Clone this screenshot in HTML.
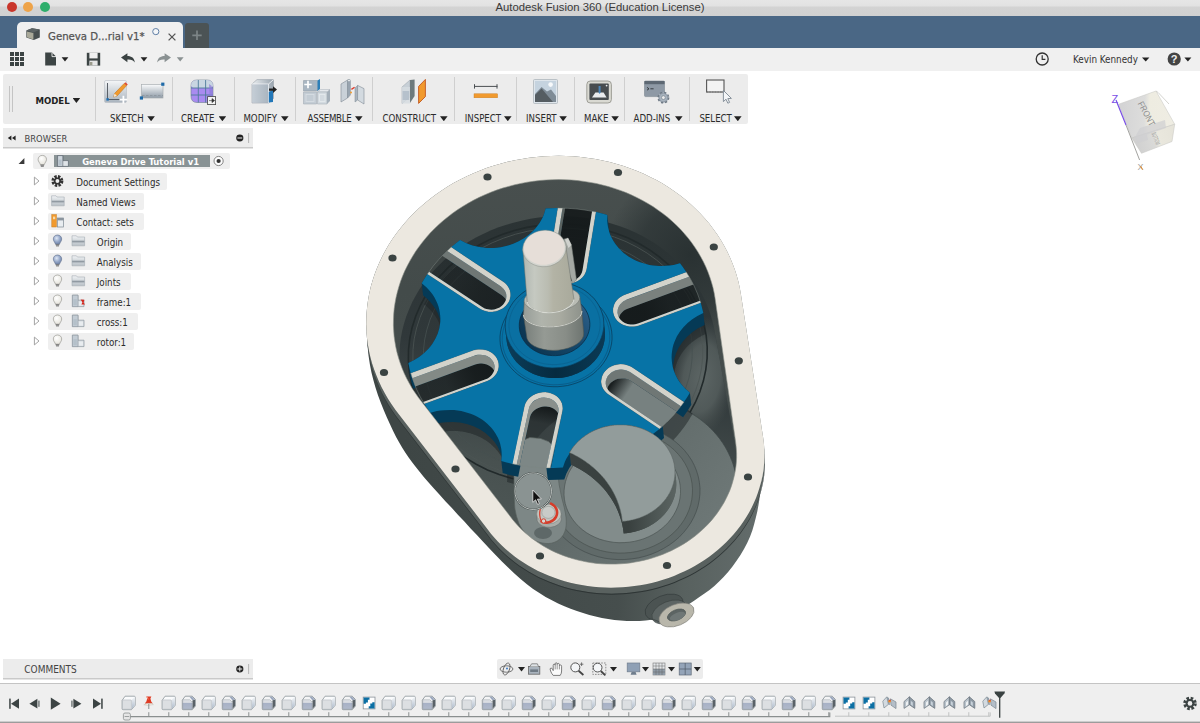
<!DOCTYPE html>
<html><head><meta charset="utf-8"><title>Autodesk Fusion 360 (Education License)</title>
<style>
*{box-sizing:border-box;margin:0;padding:0}
html,body{width:1200px;height:723px;overflow:hidden;background:#fff}
body{position:relative;font-family:"DejaVu Sans Condensed","DejaVu Sans","Liberation Sans",sans-serif;font-stretch:condensed;font-size:10px;color:#222;-webkit-font-smoothing:antialiased}
.abs{position:absolute}
#titlebar{left:0;top:0;width:1200px;height:16px;background:linear-gradient(#e6e6e6 0,#e2e2e2 6px,#d3d3d3 7px,#d1d1d1 16px)}
#title{left:0;top:0;width:1200px;height:15px;line-height:14px;text-align:center;font-family:"Liberation Sans",sans-serif;font-stretch:normal;font-size:11.3px;color:#3a3a3a}
.tl{width:10px;height:10px;border-radius:50%;top:2px}
#tabbar{left:0;top:16px;width:1200px;height:32px;background:#4a6785}
#tab{left:17px;top:22px;width:166px;height:27px;background:#f0f0f0;border-radius:5px 5px 0 0}
#tabtxt{left:48px;top:29.8px;-webkit-text-stroke:.25px #555;font-size:11.3px;color:#555;line-height:14px;white-space:nowrap}
#plus{left:185px;top:23px;width:24px;height:25px;background:#4b5355;border-radius:3px 3px 0 0}
#qat{left:0;top:48px;width:1200px;height:23px;background:#f0f0f0}
#ribbon{left:3px;top:74px;width:745px;height:50px;background:#ececec;border-radius:2px}
.sep{width:1px;top:77px;height:44px;background:#cfcfcf}
.lbl{top:113px;height:12px;line-height:12px;font-size:9.6px;color:#2b2b2b;white-space:nowrap}
.dd{width:7.6px;height:5px;background:#222;clip-path:polygon(0 0,100% 0,50% 100%)}
#bhead{left:3px;top:128px;width:250px;height:20px;background:#ececec;border-bottom:1px solid #c9c9c9;box-shadow:0 1px 0 #e4e4e4}
#chead{left:3px;top:659px;width:250px;height:20px;background:#ececec;border-bottom:1px solid #c9c9c9;box-shadow:0 1px 0 #e4e4e4}
.row{height:16px;background:#efefef;border-radius:2px}
.rt{font-size:9.7px;line-height:12px;color:#2b2b2b;white-space:nowrap}
#timeline{left:0;top:683px;width:1200px;height:40px;background:#efefef;border-top:1px solid #c4c4c4}
#navbar{left:497px;top:659px;width:206px;height:20px;background:#ececec;border-radius:2px}
</style></head><body>
<!-- TITLEBAR -->
<div id="titlebar" class="abs"></div>
<div id="title" class="abs">Autodesk Fusion 360 (Education License)</div>
<div class="abs tl" style="left:6.5px;background:#c9362b"></div>
<div class="abs tl" style="left:23px;background:#eea348"></div>
<div class="abs tl" style="left:40px;background:#2eae6b"></div>
<div id="tabbar" class="abs"></div>
<div id="tab" class="abs"></div>
<div id="tabtxt" class="abs">Geneva D...rial v1*</div>
<div id="plus" class="abs"></div>
<div id="qat" class="abs"></div>
<!-- QAT-ICONS -->
<svg class="abs" style="left:0;top:16px" width="1200" height="56" viewBox="0 16 1200 56">
<!-- tab icon cube -->
<path d="M26.3 30.6 L32 28.2 L39.8 29.6 L39.8 37.4 L33.8 40 L26.3 37.6 Z" fill="#474f50"/>
<path d="M26.8 31.4 L33.4 33 L33.4 39.4 L26.8 37.2 Z" fill="#a9a999"/>
<path d="M26.3 30.6 L32 28.2 L39.8 29.6 L33.6 32.4 Z" fill="#5c6465"/>
<circle cx="155.8" cy="31.6" r="3.1" fill="#f4f6f8" stroke="#5f7fa6" stroke-width="1"/>
<path d="M168.6 33.6 L175.4 40.4 M175.4 33.6 L168.6 40.4" stroke="#555" stroke-width="1.3" fill="none"/>
<path d="M197 30.6 V40 M192.3 35.3 H201.7" stroke="#7d8587" stroke-width="1.7" fill="none"/>
<!-- grid -->
<g fill="#3c4444"><rect x="10" y="52" width="4" height="4"/><rect x="15" y="52" width="4" height="4"/><rect x="20" y="52" width="4" height="4"/><rect x="10" y="57" width="4" height="4"/><rect x="15" y="57" width="4" height="4"/><rect x="20" y="57" width="4" height="4"/><rect x="10" y="62" width="4" height="4"/><rect x="15" y="62" width="4" height="4"/><rect x="20" y="62" width="4" height="4"/></g>
<!-- file -->
<path d="M45.2 52.6 H52 L56 56.6 V65.6 H45.2 Z" fill="#3c4444"/><path d="M52 52.6 V56.6 H56" fill="none" stroke="#f0f0f0" stroke-width=".9"/>
<path d="M61.6 57.2 H68.4 L65 61.4 Z" fill="#222"/>
<!-- save -->
<path d="M86.8 52.8 H100.2 V65.6 H86.8 Z" fill="#3c4444"/><rect x="89.4" y="52.8" width="8.2" height="5.6" fill="#f0f0f0"/><rect x="89.4" y="60.6" width="8.2" height="5" fill="#e6e6e6"/><rect x="90" y="62" width="2.4" height="3.2" fill="#9b9b8c"/>
<!-- undo -->
<path d="M121 57.6 L127.4 53.2 V56 C131.5 56 134.6 58 134.8 62.6 C133.4 60.3 131.2 59.4 127.4 59.6 V62.2 Z" fill="#3a4242"/>
<path d="M140.6 57.2 H147.4 L144 61.4 Z" fill="#222"/>
<!-- redo -->
<path d="M171 57.6 L164.6 53.2 V56 C160.5 56 157.4 58 157.2 62.6 C158.6 60.3 160.8 59.4 164.6 59.6 V62.2 Z" fill="#8a9192"/>
<path d="M176.8 57.2 H183.6 L180.2 61.4 Z" fill="#8a9192"/>
<!-- clock -->
<circle cx="1042.2" cy="59" r="6" fill="none" stroke="#333" stroke-width="1.3"/><path d="M1042.2 55.2 V59.3 H1045.4" fill="none" stroke="#333" stroke-width="1.2"/>
<path d="M1142 57.4 H1149.4 L1145.7 61.6 Z" fill="#222"/>
<circle cx="1174.2" cy="59" r="6.6" fill="#444"/>
<text x="1174.2" y="63" font-family="Liberation Sans,sans-serif" font-weight="bold" font-size="11" fill="#f0f0f0" text-anchor="middle">?</text>
<path d="M1184.4 57.4 H1191.4 L1187.9 61.6 Z" fill="#222"/>
</svg>
<div class="abs" style="left:1073px;top:53.4px;font-size:9.8px;line-height:14px;color:#333;white-space:nowrap">Kevin Kennedy</div>
<!-- RIBBON -->
<div id="ribbon" class="abs"></div>
<!-- RIBBON-ITEMS -->
<div class="abs sep" style="left:94.5px"></div>
<div class="abs sep" style="left:172.0px"></div>
<div class="abs sep" style="left:233.5px"></div>
<div class="abs sep" style="left:295.3px"></div>
<div class="abs sep" style="left:372.3px"></div>
<div class="abs sep" style="left:454.4px"></div>
<div class="abs sep" style="left:516.4px"></div>
<div class="abs sep" style="left:574.0px"></div>
<div class="abs sep" style="left:623.6px"></div>
<div class="abs sep" style="left:689.0px"></div>
<div class="abs" style="left:9px;top:86px;width:1px;height:26px;background:#c4c4c4"></div><div class="abs" style="left:12px;top:86px;width:1px;height:26px;background:#c4c4c4"></div>
<div class="abs" style="left:35.5px;top:93.8px;font-size:9.5px;font-weight:bold;line-height:14px;color:#222">MODEL</div><div class="abs dd" style="left:72.6px;top:98px"></div>
<div class="abs lbl" style="left:110.0px">SKETCH</div><div class="abs dd" style="left:147.3px;top:116.2px"></div>
<div class="abs lbl" style="left:181.0px">CREATE</div><div class="abs dd" style="left:218.6px;top:116.2px"></div>
<div class="abs lbl" style="left:243.4px">MODIFY</div><div class="abs dd" style="left:281.0px;top:116.2px"></div>
<div class="abs lbl" style="left:307.6px;letter-spacing:-.25px">ASSEMBLE</div><div class="abs dd" style="left:355.0px;top:116.2px"></div>
<div class="abs lbl" style="left:382.4px">CONSTRUCT</div><div class="abs dd" style="left:440.0px;top:116.2px"></div>
<div class="abs lbl" style="left:464.7px">INSPECT</div><div class="abs dd" style="left:504.0px;top:116.2px"></div>
<div class="abs lbl" style="left:526.0px">INSERT</div><div class="abs dd" style="left:559.3px;top:116.2px"></div>
<div class="abs lbl" style="left:584.0px">MAKE</div><div class="abs dd" style="left:611.3px;top:116.2px"></div>
<div class="abs lbl" style="left:633.5px">ADD-INS</div><div class="abs dd" style="left:675.0px;top:116.2px"></div>
<div class="abs lbl" style="left:699.4px">SELECT</div><div class="abs dd" style="left:734.0px;top:116.2px"></div>
<svg class="abs" style="left:0;top:74px" width="760" height="50" viewBox="0 74 760 50">
<defs>
<linearGradient id="gi1" x1="0" y1="0" x2="0" y2="1"><stop offset="0" stop-color="#f4f6f8"/><stop offset="1" stop-color="#a9b3bd"/></linearGradient>
<linearGradient id="gi2" x1="0" y1="0" x2="0" y2="1"><stop offset="0" stop-color="#fafbfc"/><stop offset="1" stop-color="#8e9aa6"/></linearGradient>
<linearGradient id="gi3" x1="0" y1="0" x2="1" y2="0"><stop offset="0" stop-color="#e9edf0"/><stop offset="1" stop-color="#9aa5af"/></linearGradient>
</defs>
<!-- sketch -->
<rect x="104.5" y="80.5" width="22" height="22" rx="1.5" fill="url(#gi1)" stroke="#b8bec4" stroke-width=".6"/>
<path d="M107.5 83 V99.5 H124" fill="none" stroke="#5a6068" stroke-width="1"/>
<rect x="106.4" y="98.2" width="2.4" height="2.4" fill="#1d6fb5"/>
<path d="M114.5 93.6 L124.2 83.4 L126.6 85.6 L117 96 L113.6 97 Z" fill="#f19a2e" stroke="#b56a14" stroke-width=".5"/>
<path d="M124.2 83.4 L125.4 82.2 L127.8 84.4 L126.6 85.6 Z" fill="#e04a32"/>
<path d="M114.5 93.6 L117 96 L113.6 97 Z" fill="#f3e7d3"/>
<path d="M123.4 95.8 V103.6 M119.5 99.7 H127.3" stroke="#fff" stroke-width="1.8"/>
<!-- rectangle tool -->
<rect x="141.5" y="84.5" width="21.5" height="13.5" fill="url(#gi2)" stroke="#a9aeb2" stroke-width=".7"/>
<path d="M142 95.5 H163" stroke="#8b949c" stroke-width=".8" stroke-dasharray="2.5 1.5"/>
<rect x="161.2" y="82.6" width="3.2" height="3.2" fill="#1f6aa8"/><rect x="139.8" y="96.4" width="3.2" height="3.2" fill="#1f6aa8"/>
<!-- create -->
<path d="M191 86 Q191 80 197 80 H207 Q213 80 213 86 V96 Q213 102.5 207 102.5 H197 Q191 102.5 191 96 Z" fill="#a98bf0" stroke="#6f7f8e" stroke-width=".6"/>
<path d="M191 86 Q191 80 197 80 H207 Q213 80 213 86 L211 88 H193 Z" fill="#c9d6e2"/>
<path d="M198.3 80 V102.5 M205.6 80 V102.5 M191 88 H213 M191 95 H213" stroke="#4f7a9a" stroke-width=".9" fill="none"/>
<path d="M209 84 Q213 86 213 92 V96 Q213 100 210 101.6 Z" fill="#8b7bd8" opacity=".7"/>
<rect x="207.6" y="96.6" width="8" height="8" fill="#f4f4f4" stroke="#444" stroke-width=".8"/>
<path d="M209 100.6 H212 V98.6 L214.6 100.6 L212 102.6 V100.6" fill="#333" stroke="#333" stroke-width=".6"/>
<!-- modify -->
<path d="M252 84 L257 79.6 H273.5 V98.5 L268.5 103 H252 Z" fill="url(#gi3)" stroke="#9aa3ab" stroke-width=".6"/>
<path d="M252 84 H268.5 V103 M268.5 84 L273.5 79.6" fill="none" stroke="#eef1f4" stroke-width=".9"/>
<rect x="252.4" y="84.4" width="15.8" height="18.2" fill="#a7b4c1" opacity=".55"/>
<path d="M268.8 92 L273 90 V102 L268.8 102.6 Z" fill="#2277b8"/>
<path d="M269 88.4 H273 V86.2 L277 89.6 L273 93 V90.8 H269 Z" fill="#222"/>
<!-- assemble 1 -->
<path d="M303.5 80.5 H317.5 V91 H303.5 Z" fill="#a9b6c2" stroke="#8894a0" stroke-width=".5"/>
<path d="M317.5 80.5 L320 79 V89 L317.5 91 Z" fill="#2d7fb8"/>
<path d="M308 80.8 V88.2 M304.3 84.5 H311.7" stroke="#fff" stroke-width="1.7"/>
<path d="M303.5 92 H316.5 V104 H303.5 Z" fill="#c3ccd4" stroke="#9aa5ae" stroke-width=".5"/>
<path d="M317.5 92 H327 L330 89.5 H320.5 Z" fill="#e4e8ec" stroke="#9aa5ae" stroke-width=".4"/>
<path d="M317.5 92 H327 V104 H317.5 Z" fill="#d3dae0" stroke="#9aa5ae" stroke-width=".5"/>
<path d="M327 92 L330 89.5 V101 L327 104 Z" fill="#a4afb9"/>
<rect x="306" y="94.4" width="8" height="7" fill="none" stroke="#d9dfe4" stroke-width=".8"/><rect x="319.6" y="94.4" width="5.4" height="7" fill="none" stroke="#e7ebee" stroke-width=".8"/>
<!-- assemble 2 (joint) -->
<path d="M341 84 L347.6 80 V98 L341 102 Z" fill="#c9d1d8" stroke="#7f8a94" stroke-width=".6"/>
<path d="M347.6 80 Q349.6 78.6 350.4 81 V95 L347.6 98 Z" fill="#9aa6b1" stroke="#7f8a94" stroke-width=".5"/>
<ellipse cx="349" cy="80.4" rx="1.5" ry="1" fill="#eef1f3" stroke="#7f8a94" stroke-width=".4"/>
<path d="M355 88 L357.6 85.4 V100 L355 102 Z" fill="#aab5bf" stroke="#7f8a94" stroke-width=".5"/>
<path d="M357.6 85.4 L364 88.6 V104 L357.6 100 Z" fill="#d3dae0" stroke="#7f8a94" stroke-width=".6"/>
<path d="M351.4 89.4 L354.6 87.2" stroke="#e03a2a" stroke-width="1.3"/><circle cx="351" cy="92.6" r="1" fill="#f19a2e"/>
<!-- construct -->
<path d="M402 87 L410 80 V97 L402 103.5 Z" fill="#c7cfd6" stroke="#98a2ab" stroke-width=".5"/>
<path d="M410 80 L414.6 79.4 V96 L410 103 V97 Z" fill="#6d7a7d"/>
<path d="M402 87 H410 V103.5 H402 Z" fill="#d6dce1" opacity=".8"/>
<rect x="402.6" y="91" width="6.6" height="9" fill="#a9b6c3" opacity=".7"/>
<path d="M418.6 86.4 L425.4 79.4 V96.6 L418.6 103.4 Z" fill="#f19a2e" stroke="#c2571f" stroke-width=".9"/>
<!-- inspect -->
<path d="M474 86.4 H497.4 M474.5 84.2 V88.6 M497 84.2 V88.6" stroke="#4a4f52" stroke-width="1" fill="none"/>
<rect x="474" y="93.8" width="23.6" height="4" fill="#f19a2e" stroke="#c67a1f" stroke-width=".4"/>
<!-- insert -->
<rect x="533.5" y="79.5" width="24" height="24" rx="1" fill="#dfe6ec" stroke="#aeb6bd" stroke-width=".8"/>
<rect x="535" y="81" width="21" height="21" fill="#c5d3df"/>
<path d="M535 102 V94 L541.6 87 L547 91.4 L551 89.4 L556 96 V102 Z" fill="#7f8c97"/>
<path d="M535 102 V95 L541.6 88.4 L553 102 Z" fill="#555d62"/>
<circle cx="550.6" cy="84.6" r="2.3" fill="#f7f9fb"/>
<!-- make -->
<rect x="586.8" y="81" width="24.6" height="22" rx="3.5" fill="#d9d9d2" stroke="#8e8e86" stroke-width=".8"/>
<rect x="589.4" y="83.6" width="19.4" height="16.4" rx="1" fill="#474c4f"/>
<path d="M592 97.6 L595.4 92.6 H603.6 L606.6 97.6 Z" fill="#e9ebed"/>
<path d="M598.6 86 H600.6 V92.6 L599.6 94 L598.6 92.6 Z" fill="#4d86b8"/>
<circle cx="606.6" cy="85.6" r=".9" fill="#e9ebed"/>
<!-- add-ins -->
<rect x="644.5" y="81" width="20" height="15.6" rx="1" fill="#8e99a5" stroke="#6f7a85" stroke-width=".5"/>
<rect x="644.5" y="81" width="20" height="3.2" fill="#5d6873"/>
<path d="M647 87.4 L649 88.8 L647 90.2 M650.4 88.8 H653.6" stroke="#2d3338" stroke-width=".9" fill="none"/>
<circle cx="663.4" cy="97.6" r="5.2" fill="#b4bec8" stroke="#6f7a85" stroke-width="1.6" stroke-dasharray="2.2 1.9"/>
<circle cx="663.4" cy="97.6" r="4.2" fill="#a9b4bf" stroke="#7d8893" stroke-width=".6"/>
<circle cx="663.4" cy="97.6" r="1.9" fill="#ececec" stroke="#6f7a85" stroke-width=".6"/>
<!-- select -->
<rect x="706.6" y="80" width="17.4" height="12" fill="#f4f4f4" stroke="#555" stroke-width="1.1"/>
<path d="M706.6 92 H724" stroke="#777" stroke-width="1" stroke-dasharray="1.5 1.2"/>
<path d="M723.4 90.4 L723.4 101.6 L726 99.2 L727.8 103.2 L729.6 102.4 L727.8 98.6 L731.4 98.4 Z" fill="#f4f6f8" stroke="#7d8893" stroke-width=".9" stroke-linejoin="round"/>
</svg>
<!-- BROWSER -->
<div id="bhead" class="abs"></div>
<!-- BROWSER-ITEMS -->
<div class="abs" style="left:24.5px;top:131.7px;font-size:9.3px;line-height:14px;color:#444">BROWSER</div>
<div class="abs row" style="left:33px;top:153px;width:197px;height:16px"></div>
<div class="abs" style="left:54px;top:155px;width:155.5px;height:12.4px;background:#899395"></div>
<div class="abs" style="left:82.2px;top:154.5px;font-size:9.35px;font-weight:bold;line-height:13px;color:#fff;white-space:nowrap">Geneva Drive Tutorial v1</div>
<div class="abs row" style="left:48px;top:173px;width:118.8px;height:16.5px"></div>
<div class="abs rt" style="left:76.3px;top:176.6px">Document Settings</div>
<div class="abs row" style="left:48px;top:193px;width:95.6px;height:16.5px"></div>
<div class="abs rt" style="left:76.3px;top:196.6px">Named Views</div>
<div class="abs row" style="left:48px;top:213px;width:95.6px;height:16.5px"></div>
<div class="abs rt" style="left:76.3px;top:216.6px">Contact: sets</div>
<div class="abs row" style="left:48px;top:233px;width:82.7px;height:16.5px"></div>
<div class="abs rt" style="left:96.8px;top:236.6px">Origin</div>
<div class="abs row" style="left:48px;top:253px;width:92.8px;height:16.5px"></div>
<div class="abs rt" style="left:96.8px;top:256.6px">Analysis</div>
<div class="abs row" style="left:48px;top:273px;width:82.7px;height:16.5px"></div>
<div class="abs rt" style="left:96.8px;top:276.6px">Joints</div>
<div class="abs row" style="left:48px;top:293px;width:92.8px;height:16.5px"></div>
<div class="abs rt" style="left:96.8px;top:296.6px">frame:1</div>
<div class="abs row" style="left:48px;top:313px;width:89.8px;height:16.5px"></div>
<div class="abs rt" style="left:96.8px;top:316.6px">cross:1</div>
<div class="abs row" style="left:48px;top:333px;width:85.7px;height:16.5px"></div>
<div class="abs rt" style="left:96.8px;top:336.6px">rotor:1</div>
<svg class="abs" style="left:0;top:126px" width="260" height="230" viewBox="0 126 260 230">
<defs><linearGradient id="gfold" x1="0" y1="0" x2="0" y2="1"><stop offset="0" stop-color="#f2f4f6"/><stop offset=".45" stop-color="#d5dade"/><stop offset=".5" stop-color="#9aa3ab"/><stop offset=".62" stop-color="#8b949c"/><stop offset=".7" stop-color="#c9cfd4"/><stop offset="1" stop-color="#b9c0c6"/></linearGradient>
<radialGradient id="gbon" cx=".4" cy=".35" r=".7"><stop offset="0" stop-color="#dfe8f6"/><stop offset=".6" stop-color="#8fa2c4"/><stop offset="1" stop-color="#6f82a6"/></radialGradient>
<radialGradient id="gboff" cx=".4" cy=".35" r=".7"><stop offset="0" stop-color="#ffffff"/><stop offset="1" stop-color="#e4e2da"/></radialGradient>
<g id="bulbon"><path d="M0 -5.6 C2.6 -5.6 4.2 -3.8 4.2 -1.6 C4.2 0.6 2.4 1.8 2 3.6 H-2 C-2.4 1.8 -4.2 0.6 -4.2 -1.6 C-4.2 -3.8 -2.6 -5.6 0 -5.6 Z" fill="url(#gbon)" stroke="#5f6f8c" stroke-width=".6"/><path d="M-1.8 4.2 H1.8 M-1.5 5.3 H1.5" stroke="#555" stroke-width=".8"/></g>
<g id="bulboff"><path d="M0 -5.6 C2.6 -5.6 4.2 -3.8 4.2 -1.6 C4.2 0.6 2.4 1.8 2 3.6 H-2 C-2.4 1.8 -4.2 0.6 -4.2 -1.6 C-4.2 -3.8 -2.6 -5.6 0 -5.6 Z" fill="url(#gboff)" stroke="#8c8c86" stroke-width=".6"/><path d="M-1.8 4.2 H1.8 M-1.5 5.3 H1.5" stroke="#555" stroke-width=".8"/></g>
<g id="fold"><path d="M0 1 H4.4 L5.4 2.2 H12.6 V11 H0 Z" fill="url(#gfold)" stroke="#a3abb2" stroke-width=".6"/></g>
<g id="comp"><path d="M0 0 H5.6 V5 H11.6 V11.4 H0 Z" fill="#d9dfe4" stroke="#8d979f" stroke-width=".7"/><path d="M0 0 H5.6 V11.4 H0 Z" fill="#c3ccd4" stroke="#8d979f" stroke-width=".6"/><rect x="1" y="4" width="3.4" height="6" fill="#aebac5" opacity=".7"/><rect x="6.6" y="6.4" width="4" height="4" fill="#eef1f3" opacity=".7"/></g>
</defs>
<path d="M11.4 135.6 V140.4 L7.8 138 Z M15.6 135.6 V140.4 L12 138 Z" fill="#222"/>
<ellipse cx="239.8" cy="138" rx="3.6" ry="3.4" fill="#222"/><rect x="237.4" y="137.5" width="4.8" height="1" fill="#ececec"/>
<path d="M248.6 133 V143" stroke="#b5b5b5" stroke-width="1"/>
<path d="M24.4 158 V164 H18.6 Z" fill="#3a3a3a"/>
<use href="#bulboff" x="42.3" y="161"/>
<g transform="translate(57.6 155.6)"><path d="M0 0 H5.2 V5 H10.8 V10.8 H0 Z" fill="#dfe4e8" stroke="#59636b" stroke-width=".7"/><path d="M0 0 H5.2 V10.8 H0 Z" fill="#cdd5dc" stroke="#59636b" stroke-width=".6"/><rect x="1" y="4" width="3" height="5.6" fill="#aebac5" opacity=".8"/></g>
<circle cx="218.6" cy="161" r="4.6" fill="#fdfdfd" stroke="#777" stroke-width=".9"/><circle cx="218.6" cy="161" r="2.1" fill="#333"/>
<path d="M34.4 177.1 L39 181.0 L34.4 184.9 Z" fill="#fff" stroke="#9a9a9a" stroke-width=".9" stroke-linejoin="round"/>
<g transform="translate(57.4 181.0)"><circle r="4.3" fill="none" stroke="#333" stroke-width="3.4" stroke-dasharray="2.2 1.18"/><circle r="3.6" fill="#333"/><circle r="1.9" fill="#efefef"/></g>
<path d="M34.4 197.1 L39 201.0 L34.4 204.9 Z" fill="#fff" stroke="#9a9a9a" stroke-width=".9" stroke-linejoin="round"/>
<use href="#fold" x="51.6" y="194.8"/>
<path d="M34.4 217.1 L39 221.0 L34.4 224.9 Z" fill="#fff" stroke="#9a9a9a" stroke-width=".9" stroke-linejoin="round"/>
<g transform="translate(51.8 214.6)"><rect x="0" y="0" width="4.6" height="12.4" fill="#f19a2e" stroke="#c67a1f" stroke-width=".5"/><rect x="5.6" y="3.4" width="6.2" height="9" fill="#e9edf0" stroke="#7f8a93" stroke-width=".7"/><rect x="5.6" y="3.4" width="6.2" height="2.4" fill="#8b959e"/><rect x="1.2" y="2" width="2.2" height="2.6" fill="#f7d9a8"/></g>
<path d="M34.4 237.1 L39 241.0 L34.4 244.9 Z" fill="#fff" stroke="#9a9a9a" stroke-width=".9" stroke-linejoin="round"/>
<use href="#bulbon" x="57.5" y="240.6"/>
<use href="#fold" x="72" y="234.8"/>
<path d="M34.4 257.1 L39 261.0 L34.4 264.9 Z" fill="#fff" stroke="#9a9a9a" stroke-width=".9" stroke-linejoin="round"/>
<use href="#bulbon" x="57.5" y="260.6"/>
<use href="#fold" x="72" y="254.8"/>
<path d="M34.4 277.1 L39 281.0 L34.4 284.9 Z" fill="#fff" stroke="#9a9a9a" stroke-width=".9" stroke-linejoin="round"/>
<use href="#bulboff" x="57.5" y="280.6"/>
<use href="#fold" x="72" y="274.8"/>
<path d="M34.4 297.1 L39 301.0 L34.4 304.9 Z" fill="#fff" stroke="#9a9a9a" stroke-width=".9" stroke-linejoin="round"/>
<use href="#bulboff" x="57.5" y="300.6"/>
<use href="#comp" x="72.4" y="295.2"/>
<path d="M80.6 299.4 L84.4 299.8 L83.6 302.6 L85 304.6 L81.4 304.4 L82.4 302.2 Z" fill="#d5281e"/>
<path d="M34.4 317.1 L39 321.0 L34.4 324.9 Z" fill="#fff" stroke="#9a9a9a" stroke-width=".9" stroke-linejoin="round"/>
<use href="#bulboff" x="57.5" y="320.6"/>
<use href="#comp" x="72.4" y="315.2"/>
<path d="M34.4 337.1 L39 341.0 L34.4 344.9 Z" fill="#fff" stroke="#9a9a9a" stroke-width=".9" stroke-linejoin="round"/>
<use href="#bulboff" x="57.5" y="340.6"/>
<use href="#comp" x="72.4" y="335.2"/>
</svg>
<!-- MODEL -->
<svg class="abs" style="left:0;top:0" width="1200" height="723" viewBox="0 0 1200 723">
<defs>
<linearGradient id="gbody" gradientUnits="userSpaceOnUse" x1="400" y1="500" x2="760" y2="520"><stop offset="0" stop-color="#3e4645"/><stop offset=".62" stop-color="#464e4d"/><stop offset=".8" stop-color="#58615f"/><stop offset="1" stop-color="#636c6b"/></linearGradient>
<linearGradient id="gwall" gradientUnits="userSpaceOnUse" x1="0" y1="175" x2="0" y2="560"><stop offset="0" stop-color="#484f4e"/><stop offset=".3" stop-color="#434b4a"/><stop offset=".6" stop-color="#464e4d"/><stop offset="1" stop-color="#4a5251"/></linearGradient><radialGradient id="gwdark" gradientUnits="userSpaceOnUse" cx="690" cy="255" r="85"><stop offset="0" stop-color="#283031" stop-opacity=".95"/><stop offset=".6" stop-color="#2b3334" stop-opacity=".7"/><stop offset="1" stop-color="#2b3334" stop-opacity="0"/></radialGradient>
<clipPath id="cinner"><path d="M393.4 325.2L393.5 319.7L393.7 314.2L394.2 308.7L395.0 303.2L396.0 297.7L397.3 292.3L398.8 286.9L400.5 281.6L402.5 276.3L404.7 271.1L407.2 266.0L409.9 260.9L412.8 256.0L415.9 251.1L419.2 246.4L422.8 241.7L426.5 237.2L430.4 232.8L434.6 228.6L438.9 224.4L443.4 220.5L448.1 216.7L452.9 213.0L457.9 209.5L463.1 206.2L468.4 203.1L473.8 200.1L479.3 197.3L485.0 194.7L490.8 192.3L496.6 190.1L502.6 188.1L508.6 186.4L514.7 184.8L520.9 183.4L527.2 182.2L533.4 181.3L539.7 180.5L546.1 180.0L552.4 179.7L558.7 179.6L565.1 179.7L571.4 180.0L577.7 180.6L584.0 181.4L590.2 182.4L596.3 183.5L602.4 185.0L608.5 186.6L614.4 188.4L620.3 190.4L626.0 192.6L631.7 195.1L637.2 197.7L642.6 200.5L647.9 203.5L653.0 206.6L657.9 210.0L662.8 213.5L667.4 217.1L671.9 221.0L676.2 225.0L680.3 229.1L684.2 233.4L687.9 237.8L691.4 242.3L694.7 247.0L697.8 251.7L700.6 256.6L703.3 261.6L705.7 266.6L707.9 271.8L709.8 277.0L711.5 282.3L713.0 287.6L714.2 293.0L715.1 298.4L735.5 441.0L736.0 445.2L736.4 449.3L736.6 453.5L736.6 457.7L736.4 461.9L736.0 466.1L735.4 470.3L734.6 474.4L733.6 478.5L732.5 482.6L731.2 486.7L729.7 490.7L728.0 494.6L726.1 498.5L724.1 502.4L721.9 506.1L719.5 509.8L717.0 513.4L714.3 516.9L711.5 520.4L708.5 523.7L705.3 526.9L702.0 530.1L698.6 533.1L695.1 536.0L691.4 538.7L687.6 541.4L683.7 543.9L679.7 546.3L675.5 548.5L671.3 550.7L667.0 552.6L662.7 554.4L658.2 556.1L653.7 557.6L649.1 559.0L644.4 560.2L639.7 561.2L635.0 562.1L630.3 562.9L625.5 563.4L620.7 563.8L615.8 564.1L611.0 564.1L606.2 564.0L601.4 563.8L596.6 563.4L591.9 562.8L587.1 562.0L582.5 561.1L577.8 560.0L573.2 558.8L568.7 557.4L564.3 555.9L559.9 554.2L555.6 552.4L551.4 550.4L547.3 548.3L543.3 546.0L539.5 543.6L535.7 541.1L532.0 538.4L528.5 535.6L525.1 532.7L521.8 529.7L518.7 526.5L515.8 523.3L512.9 519.9L510.3 516.5L418.6 397.8L415.3 393.1L412.2 388.4L409.4 383.5L406.7 378.5L404.3 373.5L402.1 368.3L400.2 363.1L398.5 357.8L397.0 352.5L395.8 347.1L394.9 341.7L394.1 336.2L393.7 330.7Z"/></clipPath>
</defs>
<path d="M762.0 478.0L763.0 472.9L763.7 467.8L764.2 462.7L764.4 457.6L764.4 452.5L764.2 447.3L763.8 442.2L763.1 437.2L740.9 294.2L739.8 287.9L738.4 281.6L736.7 275.4L734.7 269.2L732.4 263.2L729.9 257.2L727.1 251.3L724.0 245.5L720.7 239.8L717.1 234.3L713.3 228.9L709.2 223.6L704.9 218.4L700.3 213.5L695.5 208.7L690.5 204.0L685.3 199.6L679.9 195.3L674.3 191.2L668.5 187.3L662.6 183.6L656.4 180.1L650.1 176.9L643.7 173.8L637.1 171.0L630.4 168.4L623.6 166.1L616.7 163.9L609.7 162.1L602.6 160.4L595.4 159.0L588.1 157.9L580.8 157.0L573.5 156.3L566.1 155.9L558.8 155.8L551.4 155.9L544.0 156.3L536.6 156.9L529.3 157.8L522.0 158.9L514.7 160.2L507.5 161.8L500.4 163.7L493.4 165.8L486.4 168.1L479.6 170.7L472.9 173.4L466.3 176.5L459.8 179.7L453.5 183.1L447.3 186.8L441.3 190.7L435.5 194.7L429.9 199.0L424.4 203.4L419.2 208.0L414.2 212.8L409.3 217.8L404.7 222.9L400.4 228.2L396.3 233.6L392.4 239.1L388.7 244.8L385.4 250.5L382.2 256.4L379.4 262.4L376.8 268.5L374.5 274.6L372.5 280.8L370.7 287.1L369.2 293.4L368.1 299.8L367.2 306.2L366.6 312.6L366.3 319.0L366.2 325.1L366.0 325.0L366.2 327.2L366.5 331.2L366.5 331.8L366.6 333.7L367.0 338.5L367.7 347.5L368.6 356.1L369.9 364.4L371.4 372.2L373.3 379.8L375.4 387.3L377.9 394.9L380.7 402.5L383.8 410.2L386.9 417.5L390.0 424.3L393.0 430.8L396.1 436.9L399.2 442.6L402.4 448.0L405.6 453.1L409.0 457.9L412.5 462.7L416.2 467.5L420.0 472.3L424.0 477.2L428.6 482.5L433.7 488.3L439.4 494.6L445.6 501.4L451.9 508.1L458.1 514.9L464.4 521.6L470.6 528.4L476.9 535.1L483.1 541.8L489.4 548.4L495.6 555.1L501.9 561.4L508.1 567.6L514.4 573.4L520.6 579.1L526.9 584.2L533.1 588.9L539.4 593.1L545.6 596.9L551.9 600.3L558.1 603.4L564.4 606.2L570.6 608.8L576.9 611.0L583.1 613.1L589.4 614.9L595.6 616.6L601.9 617.9L608.1 619.1L614.4 619.9L620.6 620.6L626.9 620.9L633.1 621.1L639.4 620.9L645.6 620.6L651.6 619.8L657.2 618.8L662.5 617.4L667.5 615.6L672.6 613.4L677.9 610.8L683.2 607.8L688.8 604.2L694.1 600.7L699.4 597.1L704.5 593.5L709.5 589.9L714.4 585.9L719.1 581.6L723.6 576.9L728.1 572.0L732.3 566.7L736.4 561.1L740.3 555.2L744.0 548.9L747.3 542.7L750.1 536.5L752.4 530.3L754.2 524.0L755.8 517.8L757.3 511.6L758.4 505.4L759.4 499.3L760.2 492.8L760.8 485.9L761.0 482.2Z" fill="url(#gbody)"/>
<path d="M367.0 337.8L367.5 344.2L368.4 350.6L369.5 356.9L370.9 363.2L372.6 369.4L374.6 375.6L376.9 381.6L379.4 387.6L382.2 393.5L385.3 399.3L388.6 405.0L392.2 410.5L396.0 415.9L488.2 535.4L491.4 539.7L494.9 543.7L498.5 547.7L502.3 551.6L506.3 555.3L510.5 558.8L514.8 562.2L519.2 565.5L523.9 568.6L528.6 571.5L533.5 574.3L538.5 576.9L543.7 579.3L548.9 581.6L554.2 583.6L559.7 585.5L565.2 587.2L570.8 588.7L576.5 590.0L582.2 591.1L588.0 592.0L593.8 592.8L599.6 593.3L605.5 593.6L611.4 593.7L617.3 593.6L623.2 593.3L629.1 592.8L634.9 592.1L640.7 591.3L646.5 590.2L652.2 588.9L657.9 587.4L663.5 585.8L669.1 583.9L674.5 581.9L679.9 579.6L685.1 577.2L690.3 574.7L695.3 571.9L700.2 569.0L705.0 565.9L709.7 562.7L714.2 559.3L718.5 555.7L722.7 552.0L726.7 548.2L730.5 544.3L734.2 540.2L737.7 536.0L741.0 531.7L744.1 527.3L747.0 522.8L749.7 518.2L752.2 513.5L754.4 508.7L756.5 503.9L758.3 499.0L759.9 494.0L761.3 489.0L762.5 484.0L763.5 478.9L764.2 473.8L764.7 468.7L764.9 463.6L764.9 458.5L764.7 453.3L764.3 448.2L764.2 448.0L764.4 452.5L764.4 457.6L764.2 462.7L763.7 467.8L763.0 472.9L762.0 478.0L760.8 483.0L759.4 488.0L757.8 493.0L756.0 497.9L753.9 502.7L751.7 507.5L749.2 512.2L746.5 516.8L743.6 521.3L740.5 525.7L737.2 530.0L733.7 534.2L730.0 538.3L726.2 542.2L722.2 546.0L718.0 549.7L713.7 553.3L709.2 556.7L704.5 559.9L699.7 563.0L694.8 565.9L689.8 568.7L684.6 571.2L679.4 573.6L674.0 575.9L668.6 577.9L663.0 579.8L657.4 581.4L651.7 582.9L646.0 584.2L640.2 585.3L634.4 586.1L628.6 586.8L622.7 587.3L616.8 587.6L610.9 587.7L605.0 587.6L599.1 587.3L593.3 586.8L587.5 586.0L581.7 585.1L576.0 584.0L570.3 582.7L564.7 581.2L559.2 579.5L553.7 577.6L548.4 575.6L543.2 573.3L538.0 570.9L533.0 568.3L528.1 565.5L523.4 562.6L518.7 559.5L514.3 556.2L510.0 552.8L505.8 549.3L501.8 545.6L498.0 541.7L494.4 537.7L490.9 533.7L487.7 529.4L395.5 409.9L391.7 404.5L388.1 399.0L384.8 393.3L381.7 387.5L378.9 381.6L376.4 375.6L374.1 369.6L372.1 363.4L370.4 357.2L369.0 350.9L367.9 344.6L367.0 338.2L367.0 337.4Z" fill="#59615f"/>
<path d="M368.5 351.6L369.6 357.9L371.0 364.2L372.7 370.4L374.7 376.6L377.0 382.6L379.5 388.6L382.3 394.5L385.4 400.3L388.7 406.0L392.3 411.5L396.1 416.9L488.3 536.4L491.5 540.7L495.0 544.7L498.6 548.7L502.4 552.6L506.4 556.3L510.6 559.8L514.9 563.2L519.3 566.5L524.0 569.6L528.7 572.5L533.6 575.3L538.6 577.9L543.8 580.3L549.0 582.6L554.3 584.6L559.8 586.5L565.3 588.2L570.9 589.7L576.6 591.0L582.3 592.1L588.1 593.0L593.9 593.8L599.7 594.3L605.6 594.6L611.5 594.7L617.4 594.6L623.3 594.3L629.2 593.8L635.0 593.1L640.8 592.3L646.6 591.2L652.3 589.9L658.0 588.4L663.6 586.8L669.2 584.9L674.6 582.9L680.0 580.6L685.2 578.2L690.4 575.7L695.4 572.9L700.3 570.0L705.1 566.9L709.8 563.7L714.3 560.3L718.6 556.7L722.8 553.0L726.8 549.2L730.6 545.3L734.3 541.2L737.8 537.0L741.1 532.7L744.2 528.3L747.1 523.8L749.8 519.2L752.3 514.5L754.5 509.7L756.6 504.9L758.4 500.0L760.0 495.0L761.4 490.0L762.6 485.0L763.6 479.9L764.3 474.8L764.8 469.7L765.0 464.6L765.0 459.5L764.8 454.3L764.4 449.2L764.3 448.9L764.7 453.3L764.9 458.5L764.9 463.6L764.7 468.7L764.2 473.8L763.5 478.9L762.5 484.0L761.3 489.0L759.9 494.0L758.3 499.0L756.5 503.9L754.4 508.7L752.2 513.5L749.7 518.2L747.0 522.8L744.1 527.3L741.0 531.7L737.7 536.0L734.2 540.2L730.5 544.3L726.7 548.2L722.7 552.0L718.5 555.7L714.2 559.3L709.7 562.7L705.0 565.9L700.2 569.0L695.3 571.9L690.3 574.7L685.1 577.2L679.9 579.6L674.5 581.9L669.1 583.9L663.5 585.8L657.9 587.4L652.2 588.9L646.5 590.2L640.7 591.3L634.9 592.1L629.1 592.8L623.2 593.3L617.3 593.6L611.4 593.7L605.5 593.6L599.6 593.3L593.8 592.8L588.0 592.0L582.2 591.1L576.5 590.0L570.8 588.7L565.2 587.2L559.7 585.5L554.2 583.6L548.9 581.6L543.7 579.3L538.5 576.9L533.5 574.3L528.6 571.5L523.9 568.6L519.2 565.5L514.8 562.2L510.5 558.8L506.3 555.3L502.3 551.6L498.5 547.7L494.9 543.7L491.4 539.7L488.2 535.4L396.0 415.9L392.2 410.5L388.6 405.0L385.3 399.3L382.2 393.5L379.4 387.6L376.9 381.6L374.6 375.6L372.6 369.4L370.9 363.2L369.5 356.9L368.4 350.6L367.6 344.5L367.6 345.2Z" fill="#2e3535"/>
<g transform="rotate(-22 676.5 615)">
<ellipse cx="668" cy="603" rx="20" ry="11.5" fill="#4b5352" stroke="#333a3a" stroke-width=".6"/>
<path d="M652.6 609.5 L658.1 615 L694.9 615 L689.4 609.5 Z" fill="#5d6564"/>
<ellipse cx="671" cy="609.5" rx="18.4" ry="10.6" fill="#5d6564" stroke="#3a4241" stroke-width=".6"/>
<path d="M652.6 609.5 L658.1 615 M689.4 609.5 L694.9 615" stroke="#3a4241" stroke-width=".6"/>
<ellipse cx="676.5" cy="615" rx="18.4" ry="10.6" fill="#b9b7ab" stroke="#7f807a" stroke-width=".6"/>
<ellipse cx="676.5" cy="615" rx="9.6" ry="5.2" fill="#5c6463" stroke="#4a5251" stroke-width=".6"/>
<ellipse cx="677" cy="616.6" rx="8.2" ry="3.6" fill="#6f7776"/>
</g>
<path d="M393.4 325.2L393.5 319.7L393.7 314.2L394.2 308.7L395.0 303.2L396.0 297.7L397.3 292.3L398.8 286.9L400.5 281.6L402.5 276.3L404.7 271.1L407.2 266.0L409.9 260.9L412.8 256.0L415.9 251.1L419.2 246.4L422.8 241.7L426.5 237.2L430.4 232.8L434.6 228.6L438.9 224.4L443.4 220.5L448.1 216.7L452.9 213.0L457.9 209.5L463.1 206.2L468.4 203.1L473.8 200.1L479.3 197.3L485.0 194.7L490.8 192.3L496.6 190.1L502.6 188.1L508.6 186.4L514.7 184.8L520.9 183.4L527.2 182.2L533.4 181.3L539.7 180.5L546.1 180.0L552.4 179.7L558.7 179.6L565.1 179.7L571.4 180.0L577.7 180.6L584.0 181.4L590.2 182.4L596.3 183.5L602.4 185.0L608.5 186.6L614.4 188.4L620.3 190.4L626.0 192.6L631.7 195.1L637.2 197.7L642.6 200.5L647.9 203.5L653.0 206.6L657.9 210.0L662.8 213.5L667.4 217.1L671.9 221.0L676.2 225.0L680.3 229.1L684.2 233.4L687.9 237.8L691.4 242.3L694.7 247.0L697.8 251.7L700.6 256.6L703.3 261.6L705.7 266.6L707.9 271.8L709.8 277.0L711.5 282.3L713.0 287.6L714.2 293.0L715.1 298.4L735.5 441.0L736.0 445.2L736.4 449.3L736.6 453.5L736.6 457.7L736.4 461.9L736.0 466.1L735.4 470.3L734.6 474.4L733.6 478.5L732.5 482.6L731.2 486.7L729.7 490.7L728.0 494.6L726.1 498.5L724.1 502.4L721.9 506.1L719.5 509.8L717.0 513.4L714.3 516.9L711.5 520.4L708.5 523.7L705.3 526.9L702.0 530.1L698.6 533.1L695.1 536.0L691.4 538.7L687.6 541.4L683.7 543.9L679.7 546.3L675.5 548.5L671.3 550.7L667.0 552.6L662.7 554.4L658.2 556.1L653.7 557.6L649.1 559.0L644.4 560.2L639.7 561.2L635.0 562.1L630.3 562.9L625.5 563.4L620.7 563.8L615.8 564.1L611.0 564.1L606.2 564.0L601.4 563.8L596.6 563.4L591.9 562.8L587.1 562.0L582.5 561.1L577.8 560.0L573.2 558.8L568.7 557.4L564.3 555.9L559.9 554.2L555.6 552.4L551.4 550.4L547.3 548.3L543.3 546.0L539.5 543.6L535.7 541.1L532.0 538.4L528.5 535.6L525.1 532.7L521.8 529.7L518.7 526.5L515.8 523.3L512.9 519.9L510.3 516.5L418.6 397.8L415.3 393.1L412.2 388.4L409.4 383.5L406.7 378.5L404.3 373.5L402.1 368.3L400.2 363.1L398.5 357.8L397.0 352.5L395.8 347.1L394.9 341.7L394.1 336.2L393.7 330.7Z" fill="url(#gwall)"/>
<path d="M393.4 325.2L393.5 319.7L393.7 314.2L394.2 308.7L395.0 303.2L396.0 297.7L397.3 292.3L398.8 286.9L400.5 281.6L402.5 276.3L404.7 271.1L407.2 266.0L409.9 260.9L412.8 256.0L415.9 251.1L419.2 246.4L422.8 241.7L426.5 237.2L430.4 232.8L434.6 228.6L438.9 224.4L443.4 220.5L448.1 216.7L452.9 213.0L457.9 209.5L463.1 206.2L468.4 203.1L473.8 200.1L479.3 197.3L485.0 194.7L490.8 192.3L496.6 190.1L502.6 188.1L508.6 186.4L514.7 184.8L520.9 183.4L527.2 182.2L533.4 181.3L539.7 180.5L546.1 180.0L552.4 179.7L558.7 179.6L565.1 179.7L571.4 180.0L577.7 180.6L584.0 181.4L590.2 182.4L596.3 183.5L602.4 185.0L608.5 186.6L614.4 188.4L620.3 190.4L626.0 192.6L631.7 195.1L637.2 197.7L642.6 200.5L647.9 203.5L653.0 206.6L657.9 210.0L662.8 213.5L667.4 217.1L671.9 221.0L676.2 225.0L680.3 229.1L684.2 233.4L687.9 237.8L691.4 242.3L694.7 247.0L697.8 251.7L700.6 256.6L703.3 261.6L705.7 266.6L707.9 271.8L709.8 277.0L711.5 282.3L713.0 287.6L714.2 293.0L715.1 298.4L735.5 441.0L736.0 445.2L736.4 449.3L736.6 453.5L736.6 457.7L736.4 461.9L736.0 466.1L735.4 470.3L734.6 474.4L733.6 478.5L732.5 482.6L731.2 486.7L729.7 490.7L728.0 494.6L726.1 498.5L724.1 502.4L721.9 506.1L719.5 509.8L717.0 513.4L714.3 516.9L711.5 520.4L708.5 523.7L705.3 526.9L702.0 530.1L698.6 533.1L695.1 536.0L691.4 538.7L687.6 541.4L683.7 543.9L679.7 546.3L675.5 548.5L671.3 550.7L667.0 552.6L662.7 554.4L658.2 556.1L653.7 557.6L649.1 559.0L644.4 560.2L639.7 561.2L635.0 562.1L630.3 562.9L625.5 563.4L620.7 563.8L615.8 564.1L611.0 564.1L606.2 564.0L601.4 563.8L596.6 563.4L591.9 562.8L587.1 562.0L582.5 561.1L577.8 560.0L573.2 558.8L568.7 557.4L564.3 555.9L559.9 554.2L555.6 552.4L551.4 550.4L547.3 548.3L543.3 546.0L539.5 543.6L535.7 541.1L532.0 538.4L528.5 535.6L525.1 532.7L521.8 529.7L518.7 526.5L515.8 523.3L512.9 519.9L510.3 516.5L418.6 397.8L415.3 393.1L412.2 388.4L409.4 383.5L406.7 378.5L404.3 373.5L402.1 368.3L400.2 363.1L398.5 357.8L397.0 352.5L395.8 347.1L394.9 341.7L394.1 336.2L393.7 330.7Z" fill="url(#gwdark)"/>
<g clip-path="url(#cinner)"><defs><linearGradient id="gfloor" gradientUnits="userSpaceOnUse" x1="520" y1="215" x2="470" y2="520"><stop offset="0" stop-color="#2b3334"/><stop offset=".45" stop-color="#30383a"/><stop offset=".8" stop-color="#485150"/><stop offset="1" stop-color="#4d5655"/></linearGradient><linearGradient id="gpocket" gradientUnits="userSpaceOnUse" x1="540" y1="420" x2="700" y2="540"><stop offset="0" stop-color="#566060"/><stop offset=".5" stop-color="#626c6b"/><stop offset="1" stop-color="#6d7776"/></linearGradient></defs>
<path d="M605.5 595.2L599.3 594.4L593.2 593.4L587.2 592.0L581.2 590.4L575.4 588.5L569.7 586.3L564.2 583.9L558.8 581.2L553.6 578.3L548.5 575.2L543.7 571.8L539.1 568.2L534.7 564.4L530.6 560.4L526.7 556.2L523.0 551.8L426.3 433.2L421.9 427.2L417.8 421.0L414.1 414.6L410.8 408.0L407.9 401.3L405.4 394.5L403.4 387.6L401.7 380.5L400.5 373.4L399.7 366.3L399.4 359.1L399.5 351.8L400.0 344.6L400.9 337.5L402.3 330.3L404.1 323.3L406.3 316.3L409.0 309.4L412.0 302.6L415.5 296.0L419.3 289.6L423.5 283.3L428.1 277.2L433.1 271.3L438.4 265.7L444.0 260.2L449.9 255.1L456.1 250.2L462.6 245.6L469.4 241.3L476.4 237.3L483.6 233.7L491.0 230.3L498.6 227.3L506.4 224.7L514.3 222.4L522.4 220.4L530.5 218.8L538.7 217.6L547.0 216.8L555.3 216.4L563.5 216.3L571.8 216.6L580.1 217.3L588.2 218.3L596.3 219.7L604.3 221.5L612.2 223.7L619.9 226.2L627.5 229.1L634.8 232.3L642.0 235.8L648.9 239.7L655.5 243.8L661.9 248.3L668.0 253.1L673.8 258.1L679.3 263.4L684.5 269.0L689.3 274.8L693.7 280.8L697.8 287.0L701.5 293.4L704.8 300.0L707.7 306.7L710.2 313.5L712.2 320.4L713.9 327.5L740.1 472.0L741.0 477.4L741.6 482.8L741.8 488.2L741.8 493.7L741.4 499.1L740.7 504.5L739.6 509.9L738.3 515.2L736.6 520.5L734.6 525.7L732.3 530.8L729.7 535.8L726.8 540.7L723.6 545.4L720.1 550.0L716.4 554.5L712.4 558.7L708.2 562.8L703.7 566.7L699.0 570.4L694.1 573.8L689.0 577.1L683.7 580.1L678.3 582.9L672.7 585.4L666.9 587.7L661.1 589.7L655.1 591.4L649.0 592.9L642.9 594.0L636.7 595.0L630.5 595.6L624.2 595.9L617.9 596.0L611.7 595.8Z" fill="url(#gfloor)" />
<defs><radialGradient id="gfr" gradientUnits="userSpaceOnUse" cx="0" cy="0" r="1" gradientTransform="translate(702 378) rotate(8) scale(34 62)"><stop offset="0" stop-color="#5f6867" stop-opacity=".95"/><stop offset=".55" stop-color="#586160" stop-opacity=".8"/><stop offset="1" stop-color="#4a5251" stop-opacity="0"/></radialGradient></defs>
<path d="M605.5 595.2L599.3 594.4L593.2 593.4L587.2 592.0L581.2 590.4L575.4 588.5L569.7 586.3L564.2 583.9L558.8 581.2L553.6 578.3L548.5 575.2L543.7 571.8L539.1 568.2L534.7 564.4L530.6 560.4L526.7 556.2L523.0 551.8L426.3 433.2L421.9 427.2L417.8 421.0L414.1 414.6L410.8 408.0L407.9 401.3L405.4 394.5L403.4 387.6L401.7 380.5L400.5 373.4L399.7 366.3L399.4 359.1L399.5 351.8L400.0 344.6L400.9 337.5L402.3 330.3L404.1 323.3L406.3 316.3L409.0 309.4L412.0 302.6L415.5 296.0L419.3 289.6L423.5 283.3L428.1 277.2L433.1 271.3L438.4 265.7L444.0 260.2L449.9 255.1L456.1 250.2L462.6 245.6L469.4 241.3L476.4 237.3L483.6 233.7L491.0 230.3L498.6 227.3L506.4 224.7L514.3 222.4L522.4 220.4L530.5 218.8L538.7 217.6L547.0 216.8L555.3 216.4L563.5 216.3L571.8 216.6L580.1 217.3L588.2 218.3L596.3 219.7L604.3 221.5L612.2 223.7L619.9 226.2L627.5 229.1L634.8 232.3L642.0 235.8L648.9 239.7L655.5 243.8L661.9 248.3L668.0 253.1L673.8 258.1L679.3 263.4L684.5 269.0L689.3 274.8L693.7 280.8L697.8 287.0L701.5 293.4L704.8 300.0L707.7 306.7L710.2 313.5L712.2 320.4L713.9 327.5L740.1 472.0L741.0 477.4L741.6 482.8L741.8 488.2L741.8 493.7L741.4 499.1L740.7 504.5L739.6 509.9L738.3 515.2L736.6 520.5L734.6 525.7L732.3 530.8L729.7 535.8L726.8 540.7L723.6 545.4L720.1 550.0L716.4 554.5L712.4 558.7L708.2 562.8L703.7 566.7L699.0 570.4L694.1 573.8L689.0 577.1L683.7 580.1L678.3 582.9L672.7 585.4L666.9 587.7L661.1 589.7L655.1 591.4L649.0 592.9L642.9 594.0L636.7 595.0L630.5 595.6L624.2 595.9L617.9 596.0L611.7 595.8Z" fill="url(#gfr)" />
<path d="M578.8 225.0L591.6 226.9L604.2 229.7L616.4 233.4L628.2 238.1L639.4 243.7L650.0 250.1L659.9 257.3L669.0 265.2L677.3 273.8L684.7 283.0L691.1 292.8L696.5 303.0L700.8 313.6L704.1 324.5L706.2 335.7L707.2 347.0L707.1 358.3L705.8 369.6L703.4 380.8L699.9 391.8L695.3 402.5L689.7 412.8L683.1 422.7L675.5 432.0L667.0 440.8L657.7 448.9L647.6 456.2L636.9 462.8L625.5 468.6L613.6 473.5L601.3 477.5L588.7 480.6L575.8 482.6L562.8 483.7L549.8 483.9L536.8 483.0L524.0 481.1L511.4 478.3L499.2 474.6L487.5 469.9L476.2 464.3L465.6 457.9L455.7 450.7L446.6 442.8L438.3 434.2L430.9 425.0L424.5 415.2L419.1 405.0L414.8 394.4L411.6 383.5L409.4 372.3L408.4 361.0L408.5 349.7L409.8 338.4L412.2 327.2L415.7 316.2L420.3 305.5L425.9 295.2L432.5 285.3L440.1 276.0L448.6 267.2L457.9 259.1L468.0 251.8L478.8 245.2L490.1 239.4L502.0 234.5L514.3 230.5L526.9 227.4L539.8 225.4L552.8 224.3L565.8 224.1Z" fill="none" stroke="#222a2b" stroke-width="1.6" />
<path d="M578.2 228.9L590.6 230.7L602.8 233.4L614.6 237.1L626.0 241.6L636.9 247.0L647.2 253.2L656.8 260.2L665.7 267.9L673.7 276.2L680.9 285.2L687.1 294.6L692.3 304.5L696.5 314.8L699.7 325.4L701.7 336.2L702.7 347.2L702.6 358.2L701.4 369.1L699.0 380.0L695.6 390.6L691.2 401.0L685.7 411.0L679.3 420.6L671.9 429.7L663.7 438.2L654.7 446.0L644.9 453.2L634.5 459.6L623.5 465.2L611.9 469.9L600.0 473.8L587.8 476.8L575.3 478.8L562.7 479.9L550.0 480.0L537.4 479.1L525.0 477.3L512.8 474.6L501.0 470.9L489.6 466.4L478.7 461.0L468.4 454.8L458.8 447.8L449.9 440.1L441.9 431.8L434.7 422.8L428.5 413.4L423.3 403.5L419.1 393.2L415.9 382.6L413.9 371.8L412.9 360.8L413.0 349.8L414.2 338.9L416.6 328.0L420.0 317.4L424.4 307.0L429.9 297.0L436.3 287.4L443.7 278.3L451.9 269.8L460.9 262.0L470.7 254.8L481.1 248.4L492.2 242.8L503.7 238.1L515.6 234.2L527.8 231.2L540.3 229.2L552.9 228.1L565.6 228.0Z" fill="none" stroke="#4c5554" stroke-width="0.8" />
<path d="M576.7 237.9L588.2 239.6L599.6 242.1L610.5 245.5L621.1 249.7L631.2 254.7L640.8 260.5L649.7 266.9L657.9 274.1L665.4 281.8L672.0 290.1L677.8 298.9L682.6 308.1L686.5 317.7L689.4 327.5L691.4 337.5L692.3 347.7L692.1 357.9L691.0 368.0L688.9 378.1L685.7 388.0L681.6 397.6L676.5 406.9L670.5 415.8L663.7 424.2L656.1 432.1L647.7 439.4L638.6 446.0L628.9 452.0L618.7 457.2L608.0 461.6L597.0 465.2L585.6 467.9L574.0 469.8L562.3 470.8L550.6 470.9L538.9 470.1L527.4 468.4L516.1 465.9L505.1 462.5L494.5 458.3L484.4 453.3L474.8 447.5L465.9 441.1L457.7 433.9L450.3 426.2L443.6 417.9L437.9 409.1L433.0 399.9L429.1 390.3L426.2 380.5L424.3 370.5L423.3 360.3L423.5 350.1L424.6 340.0L426.8 329.9L429.9 320.0L434.0 310.4L439.1 301.1L445.1 292.2L451.9 283.8L459.5 275.9L467.9 268.6L477.0 262.0L486.7 256.0L496.9 250.8L507.6 246.4L518.6 242.8L530.0 240.1L541.6 238.2L553.3 237.2L565.0 237.1Z" fill="none" stroke="#465050" stroke-width="0.8" />
<path d="M642.3 397.1L640.5 396.9L638.7 396.7L636.9 396.6L635.1 396.5L633.3 396.4L631.4 396.4L629.6 396.4L627.8 396.4L626.0 396.4L624.2 396.4L622.4 396.5L620.6 396.6L618.8 396.8L617.0 396.9L615.2 397.1L613.4 397.3L611.6 397.5L609.8 397.8L608.0 398.1L606.2 398.4L604.4 398.7L602.7 399.1L600.9 399.5L599.2 399.9L597.4 400.3L595.7 400.8L593.9 401.3L592.2 401.8L590.5 402.3L588.8 402.9L587.1 403.5L585.4 404.1L583.7 404.7L582.1 405.3L580.4 406.0L578.8 406.7L577.2 407.4L575.6 408.2L574.0 409.0L572.4 409.7L570.8 410.6L569.2 411.4L567.7 412.3L566.2 413.1L564.7 414.0L563.2 414.9L561.7 415.9L560.3 416.8L558.8 417.8L557.4 418.8L556.0 419.8L554.6 420.9L553.3 421.9L551.9 423.0L550.6 424.1L549.3 425.2L548.0 426.4L546.7 427.5L545.5 428.7L544.3 429.9L543.1 431.1L541.9 432.3L540.8 433.5L539.6 434.8L538.5 436.0L537.5 437.3L536.4 438.6L535.4 439.9L534.4 441.3L533.4 442.6L532.4 443.9L531.5 445.3L530.6 446.7L529.7 448.1L528.8 449.5L528.0 450.9L527.2 452.3L526.4 453.8L525.7 455.2L524.9 456.7L524.3 458.1L523.6 459.6L522.9 461.1L522.3 462.6L521.7 464.1L521.2 465.6L520.7 467.1L520.2 468.6L519.7 470.1L519.2 471.7L518.8 473.2L518.4 474.7L518.1 476.3L517.8 477.8L517.5 479.4L517.2 481.0L517.0 482.5L516.7 484.1L516.6 485.7L516.4 487.2L516.3 488.8L516.2 490.4L516.1 492.0L516.1 493.5L516.1 495.1L516.1 496.7L516.2 498.2L516.3 499.8L516.4 501.4L516.5 502.9L516.7 504.5L516.9 506.1L517.1 507.6L517.4 509.2L517.7 510.7L518.0 512.3L518.4 513.8L518.7 515.3L519.1 516.9L519.6 518.4L520.0 519.9L520.5 521.4L521.1 522.9L521.6 524.4L522.2 525.9L522.8 527.3L523.4 528.8L524.1 530.2L524.8 531.7L525.5 533.1L526.2 534.5L527.0 535.9L527.8 537.3L528.6 538.7L529.5 540.1L530.4 541.5L531.3 542.8L532.2 544.1L533.1 545.5L534.1 546.8L535.1 548.1L536.2 549.3L537.2 550.6L538.3 551.8L539.4 553.1L540.5 554.3L541.6 555.5L542.8 556.7L544.0 557.8L545.2 559.0L546.5 560.1L547.7 561.2L549.0 562.3L550.3 563.4L551.6 564.4L552.9 565.5L554.3 566.5L555.7 567.5L557.1 568.5L558.5 569.4L559.9 570.3L561.4 571.3L562.8 572.1L564.3 573.0L565.8 573.9L567.4 574.7L568.9 575.5L570.4 576.3L572.0 577.0L573.6 577.8L575.2 578.5L576.8 579.2L578.4 579.9L580.0 580.5L581.7 581.1L583.4 581.7L585.0 582.3L586.7 582.9L588.4 583.4L590.1 583.9L591.8 584.4L593.5 584.8L595.3 585.2L597.0 585.6L598.8 586.0L600.5 586.4L602.3 586.7L604.0 587.0L605.8 587.3L607.6 587.5L609.4 587.8L611.2 588.0L613.0 588.1L614.8 588.3L616.6 588.4L618.4 588.5L620.2 588.6L622.0 588.6L623.8 588.7L625.6 588.7L627.4 588.6L629.2 588.6L631.0 588.5L632.8 588.4L634.6 588.3L636.4 588.1L638.2 587.9L640.0 587.7L641.8 587.5L643.6 587.2L645.4 586.9L647.2 586.6L649.0 586.3L650.7 585.9L652.5 585.5L654.3 585.1L656.0 584.7L657.8 584.2L659.5 583.7L661.2 583.2L662.9 582.7L664.6 582.1L666.3 581.6L668.0 581.0L669.7 580.3L671.3 579.7L673.0 579.0L674.6 578.3L676.3 577.6L677.9 576.8L679.5 576.1L681.1 575.3L682.6 574.5L684.2 573.6L685.7 572.8L687.2 571.9L688.7 571.0L690.2 570.1L691.7 569.1L693.2 568.2L694.6 567.2L696.0 566.2L697.4 565.2L698.8 564.1L700.2 563.1L701.5 562.0L702.8 560.9L704.1 559.8L705.4 558.6L706.7 557.5L707.9 556.3L709.1 555.1L710.3 553.9L711.5 552.7L712.7 551.5L713.8 550.2L714.9 549.0L716.0 547.7L717.0 546.4L718.1 545.1L719.1 543.8L720.1 542.4L721.0 541.1L721.9 539.7L722.9 538.3L723.7 536.9L724.6 535.5L725.4 534.1L726.2 532.7L727.0 531.3L727.8 529.8L728.5 528.4L729.2 526.9L729.8 525.4L730.5 523.9L731.1 522.5L731.7 521.0L732.2 519.5L732.8 517.9L733.3 516.4L733.7 514.9L734.2 513.4L734.6 511.8L735.0 510.3L735.3 508.7L735.7 507.2L736.0 505.6L736.2 504.1L736.5 502.5L736.7 500.9L736.9 499.4L737.0 497.8L737.1 496.2L737.2 494.6L737.3 493.1L737.3 491.5L737.3 489.9L737.3 488.4L737.2 486.8L737.2 485.2L737.0 483.6L736.9 482.1L736.7 480.5L736.5 479.0L736.3 477.4L736.0 475.8L735.7 474.3L735.4 472.8L735.1 471.2L734.7 469.7L734.3 468.2L733.8 466.6L733.4 465.1L732.9 463.6L732.4 462.1L731.8 460.6L731.2 459.2L730.6 457.7L730.0 456.2L729.3 454.8L728.6 453.3L727.9 451.9L727.2 450.5L726.4 449.1L725.6 447.7L724.8 446.3L723.9 444.9L723.1 443.6L722.2 442.2L721.2 440.9L720.3 439.6L719.3 438.2L718.3 437.0L717.3 435.7L716.2 434.4L715.1 433.2L714.0 431.9L712.9 430.7L711.8 429.5L710.6 428.4L709.4 427.2L708.2 426.0L707.0 424.9L705.7 423.8L704.4 422.7L703.1 421.6L701.8 420.6L700.5 419.6L699.1 418.5L697.7 417.5L696.3 416.6L694.9 415.6L693.5 414.7L692.0 413.8L690.6 412.9L689.1 412.0L687.6 411.2L686.1 410.3L684.5 409.5L683.0 408.7L681.4 408.0L679.8 407.2L678.2 406.5L676.6 405.8L675.0 405.2L673.4 404.5L671.7 403.9L670.1 403.3L668.4 402.7L666.7 402.2L665.0 401.6L663.3 401.1L661.6 400.7L659.9 400.2L658.2 399.8L656.4 399.4L654.7 399.0L652.9 398.6L651.2 398.3L649.4 398.0L647.6 397.7L645.8 397.5L644.0 397.3Z" fill="url(#gpocket)" stroke="#3f4847" stroke-width=".8"/>
<path d="M568.4 229.2L566.6 229.1L564.8 229.1L562.9 229.1L561.1 229.1L559.3 229.1L557.4 229.1L555.6 229.2L553.8 229.2L551.9 229.3L550.1 229.4L548.3 229.6L548.1 229.6L548.0 229.8L547.9 230.6L547.6 231.4L547.4 232.1L547.2 232.9L546.9 233.7L546.7 234.4L546.4 235.2L546.1 235.9L545.8 236.7L545.5 237.4L545.1 238.2L544.8 238.9L544.4 239.6L544.1 240.3L543.7 241.1L543.3 241.8L542.8 242.5L542.4 243.2L542.0 243.9L541.5 244.6L541.1 245.2L540.6 245.9L540.1 246.6L539.6 247.2L539.1 247.9L538.5 248.5L538.0 249.2L537.4 249.8L536.9 250.4L536.3 251.1L535.7 251.7L535.1 252.3L534.5 252.9L533.9 253.5L533.3 254.0L532.6 254.6L532.0 255.2L531.3 255.7L530.6 256.2L530.0 256.8L529.3 257.3L528.6 257.8L527.9 258.3L527.1 258.8L526.4 259.3L525.7 259.7L524.9 260.2L524.2 260.6L523.4 261.1L522.6 261.5L521.9 261.9L521.1 262.3L520.3 262.7L519.5 263.1L518.7 263.5L517.9 263.9L517.1 264.2L516.2 264.5L515.4 264.9L514.6 265.2L513.7 265.5L512.9 265.8L512.0 266.1L511.2 266.3L510.3 266.6L509.4 266.8L508.6 267.0L507.7 267.3L506.8 267.5L505.9 267.7L505.0 267.8L504.2 268.0L503.3 268.2L502.4 268.3L501.5 268.4L500.6 268.6L499.7 268.7L498.8 268.8L497.9 268.8L497.0 268.9L496.1 268.9L495.2 269.0L494.3 269.0L493.4 269.0L492.4 269.0L491.5 269.0L490.6 269.0L489.7 269.0L488.8 268.9L487.9 268.9L487.0 268.8L486.1 268.7L485.2 268.6L484.4 268.5L483.5 268.3L482.6 268.2L481.7 268.1L480.8 267.9L479.9 267.7L479.1 267.5L478.2 267.3L477.3 267.1L476.5 266.9L475.6 266.6L474.8 266.4L473.9 266.1L473.1 265.9L472.2 265.6L471.4 265.3L470.6 265.0L469.8 264.6L468.9 264.3L468.1 264.0L467.3 263.6L466.6 263.2L465.8 262.8L465.0 262.5L464.2 262.1L463.5 261.6L462.7 261.2L462.5 261.1L461.4 261.9L460.0 262.9L458.6 264.0L457.3 265.1L455.9 266.2L454.6 267.3L453.3 268.5L452.0 269.6L450.7 270.8L449.5 272.0L448.2 273.2L447.0 274.4L445.8 275.6L444.6 276.8L443.4 278.0L442.2 279.3L441.1 280.6L440.0 281.8L438.8 283.1L437.7 284.4L436.7 285.7L435.6 287.1L434.6 288.4L433.6 289.7L432.6 291.1L431.6 292.5L430.6 293.8L429.7 295.2L428.8 296.6L427.8 298.0L427.0 299.4L426.1 300.9L425.3 302.3L424.4 303.7L424.1 304.3L424.3 304.5L425.0 305.0L425.6 305.5L426.3 306.1L426.9 306.6L427.6 307.2L428.2 307.7L428.8 308.3L429.4 308.9L430.0 309.5L430.5 310.1L431.1 310.7L431.6 311.3L432.2 311.9L432.7 312.6L433.2 313.2L433.7 313.9L434.2 314.5L434.7 315.2L435.2 315.8L435.6 316.5L436.0 317.2L436.5 317.9L436.9 318.6L437.3 319.3L437.7 320.0L438.0 320.7L438.4 321.4L438.7 322.1L439.1 322.8L439.4 323.6L439.7 324.3L440.0 325.0L440.3 325.8L440.5 326.5L440.8 327.3L441.0 328.0L441.2 328.8L441.4 329.6L441.6 330.3L441.8 331.1L441.9 331.9L442.1 332.7L442.2 333.4L442.3 334.2L442.4 335.0L442.5 335.8L442.6 336.5L442.7 337.3L442.7 338.1L442.7 338.9L442.7 339.7L442.7 340.5L442.7 341.3L442.7 342.0L442.6 342.8L442.6 343.6L442.5 344.4L442.4 345.2L442.3 346.0L442.2 346.8L442.1 347.5L441.9 348.3L441.7 349.1L441.6 349.9L441.4 350.6L441.2 351.4L440.9 352.2L440.7 352.9L440.5 353.7L440.2 354.5L439.9 355.2L439.6 356.0L439.3 356.7L439.0 357.4L438.7 358.2L438.3 358.9L438.0 359.6L437.6 360.4L437.2 361.1L436.8 361.8L436.4 362.5L435.9 363.2L435.5 363.9L435.1 364.6L434.6 365.3L434.1 365.9L433.6 366.6L433.1 367.3L432.6 367.9L432.1 368.6L431.5 369.2L431.0 369.8L430.4 370.5L429.8 371.1L429.2 371.7L428.6 372.3L428.0 372.9L427.4 373.5L426.8 374.1L426.1 374.6L425.5 375.2L424.8 375.7L424.2 376.3L423.5 376.8L422.8 377.3L422.1 377.8L421.4 378.3L420.7 378.8L419.9 379.3L419.2 379.8L418.5 380.2L417.7 380.7L416.9 381.1L416.2 381.5L415.4 382.0L414.6 382.4L413.8 382.8L413.0 383.1L412.2 383.5L411.4 383.9L411.1 384.0L411.3 384.7L411.6 386.2L411.9 387.8L412.3 389.3L412.7 390.9L413.2 392.4L413.6 394.0L414.1 395.5L414.6 397.0L415.1 398.5L415.6 400.1L416.2 401.6L416.7 403.1L417.3 404.6L417.9 406.1L418.6 407.5L419.2 409.0L419.9 410.5L420.6 411.9L421.4 413.4L422.1 414.8L422.9 416.3L423.6 417.7L424.5 419.1L425.3 420.5L426.1 421.9L427.0 423.3L427.9 424.7L428.8 426.1L429.7 427.4L430.6 428.8L431.6 430.1L432.6 431.4L433.6 432.8L434.4 433.8L434.6 433.7L435.5 433.4L436.4 433.2L437.2 432.9L438.1 432.7L439.0 432.5L439.9 432.3L440.8 432.1L441.7 432.0L442.5 431.8L443.4 431.7L444.3 431.5L445.2 431.4L446.1 431.3L447.0 431.2L447.9 431.2L448.8 431.1L449.7 431.0L450.6 431.0L451.5 431.0L452.5 430.9L453.4 430.9L454.3 431.0L455.2 431.0L456.1 431.0L457.0 431.1L457.9 431.1L458.8 431.2L459.7 431.3L460.6 431.4L461.5 431.5L462.3 431.6L463.2 431.8L464.1 431.9L465.0 432.1L465.9 432.3L466.7 432.5L467.6 432.7L468.5 432.9L469.3 433.1L470.2 433.3L471.1 433.6L471.9 433.9L472.7 434.1L473.6 434.4L474.4 434.7L475.2 435.0L476.0 435.3L476.9 435.7L477.7 436.0L478.5 436.4L479.2 436.8L480.0 437.1L480.8 437.5L481.6 437.9L482.3 438.3L483.1 438.8L483.8 439.2L484.6 439.7L485.3 440.1L486.0 440.6L486.7 441.1L487.4 441.5L488.1 442.0L488.8 442.5L489.5 443.1L490.1 443.6L490.8 444.1L491.4 444.7L492.0 445.2L492.6 445.8L493.2 446.4L493.8 446.9L494.4 447.5L495.0 448.1L495.6 448.7L496.1 449.4L496.7 450.0L497.2 450.6L497.7 451.2L498.2 451.9L498.7 452.5L499.2 453.2L499.6 453.9L500.1 454.5L500.5 455.2L500.9 455.9L501.3 456.6L501.7 457.3L502.1 458.0L502.5 458.7L502.9 459.4L503.2 460.2L503.5 460.9L503.9 461.6L504.2 462.4L504.4 463.1L504.7 463.8L505.0 464.6L505.2 465.3L505.5 466.1L505.7 466.9L505.9 467.6L506.1 468.4L506.2 469.1L506.4 469.9L506.6 470.7L506.7 471.5L506.8 472.2L506.9 473.0L507.0 473.8L507.1 474.6L507.1 475.4L507.2 476.2L507.2 476.9L507.2 477.7L507.2 478.5L507.2 479.3L507.2 480.1L507.1 480.9L507.0 481.7L507.0 481.9L507.2 482.0L508.9 482.5L510.6 483.0L512.4 483.4L514.1 483.9L515.9 484.3L517.6 484.7L519.4 485.1L521.2 485.5L523.0 485.8L524.8 486.2L526.5 486.5L528.3 486.8L530.1 487.1L531.9 487.3L533.7 487.6L535.6 487.8L537.4 488.0L539.2 488.2L541.0 488.3L542.8 488.5L544.7 488.6L546.5 488.7L548.3 488.8L550.1 488.9L552.0 488.9L553.8 488.9L555.6 488.9L557.5 488.9L559.3 488.9L561.2 488.8L563.0 488.8L564.8 488.7L566.6 488.6L568.5 488.4L568.6 488.4L568.7 488.2L568.9 487.4L569.1 486.6L569.3 485.9L569.6 485.1L569.8 484.3L570.1 483.6L570.4 482.8L570.6 482.1L571.0 481.3L571.3 480.6L571.6 479.8L572.0 479.1L572.3 478.4L572.7 477.7L573.1 476.9L573.5 476.2L573.9 475.5L574.3 474.8L574.8 474.1L575.2 473.4L575.7 472.8L576.2 472.1L576.7 471.4L577.2 470.8L577.7 470.1L578.2 469.5L578.7 468.8L579.3 468.2L579.9 467.6L580.4 466.9L581.0 466.3L581.6 465.7L582.2 465.1L582.9 464.5L583.5 464.0L584.1 463.4L584.8 462.8L585.4 462.3L586.1 461.8L586.8 461.2L587.5 460.7L588.2 460.2L588.9 459.7L589.6 459.2L590.3 458.7L591.1 458.3L591.8 457.8L592.6 457.4L593.3 456.9L594.1 456.5L594.9 456.1L595.7 455.7L596.5 455.3L597.3 454.9L598.1 454.5L598.9 454.1L599.7 453.8L600.5 453.5L601.3 453.1L602.2 452.8L603.0 452.5L603.9 452.2L604.7 451.9L605.6 451.7L606.4 451.4L607.3 451.2L608.2 451.0L609.1 450.7L609.9 450.5L610.8 450.3L611.7 450.2L612.6 450.0L613.5 449.8L614.4 449.7L615.3 449.6L616.2 449.4L617.1 449.3L618.0 449.2L618.9 449.2L619.8 449.1L620.7 449.1L621.6 449.0L622.5 449.0L623.4 449.0L624.3 449.0L625.2 449.0L626.1 449.0L627.0 449.0L627.9 449.1L628.8 449.1L629.7 449.2L630.6 449.3L631.5 449.4L632.4 449.5L633.3 449.7L634.2 449.8L635.1 449.9L635.9 450.1L636.8 450.3L637.7 450.5L638.6 450.7L639.4 450.9L640.3 451.1L641.1 451.4L642.0 451.6L642.8 451.9L643.7 452.1L644.5 452.4L645.3 452.7L646.2 453.0L647.0 453.4L647.8 453.7L648.6 454.0L649.4 454.4L650.2 454.8L651.0 455.2L651.7 455.5L652.5 455.9L653.3 456.4L654.0 456.8L654.3 456.9L655.3 456.1L656.7 455.1L658.1 454.0L659.5 452.9L660.8 451.8L662.1 450.7L663.4 449.5L664.7 448.4L666.0 447.2L667.3 446.0L668.5 444.8L669.8 443.6L671.0 442.4L672.2 441.2L673.4 440.0L674.5 438.7L675.7 437.4L676.8 436.2L677.9 434.9L679.0 433.6L680.1 432.3L681.1 430.9L682.2 429.6L683.2 428.3L684.2 426.9L685.2 425.5L686.1 424.2L687.1 422.8L688.0 421.4L688.9 420.0L689.8 418.6L690.6 417.1L691.5 415.7L692.3 414.3L692.7 413.7L692.4 413.5L691.8 413.0L691.1 412.5L690.5 411.9L689.8 411.4L689.2 410.8L688.6 410.3L688.0 409.7L687.4 409.1L686.8 408.5L686.2 407.9L685.6 407.3L685.1 406.7L684.6 406.1L684.0 405.4L683.5 404.8L683.0 404.1L682.5 403.5L682.1 402.8L681.6 402.2L681.1 401.5L680.7 400.8L680.3 400.1L679.9 399.4L679.5 398.7L679.1 398.0L678.7 397.3L678.3 396.6L678.0 395.9L677.7 395.2L677.4 394.4L677.1 393.7L676.8 393.0L676.5 392.2L676.2 391.5L676.0 390.7L675.7 390.0L675.5 389.2L675.3 388.4L675.1 387.7L675.0 386.9L674.8 386.1L674.7 385.3L674.5 384.6L674.4 383.8L674.3 383.0L674.2 382.2L674.1 381.5L674.1 380.7L674.0 379.9L674.0 379.1L674.0 378.3L674.0 377.5L674.0 376.7L674.1 376.0L674.1 375.2L674.2 374.4L674.2 373.6L674.3 372.8L674.4 372.0L674.6 371.2L674.7 370.5L674.8 369.7L675.0 368.9L675.2 368.1L675.4 367.4L675.6 366.6L675.8 365.8L676.0 365.1L676.3 364.3L676.6 363.5L676.8 362.8L677.1 362.0L677.4 361.3L677.7 360.6L678.1 359.8L678.4 359.1L678.8 358.4L679.2 357.6L679.6 356.9L680.0 356.2L680.4 355.5L680.8 354.8L681.2 354.1L681.7 353.4L682.2 352.7L682.6 352.1L683.1 351.4L683.6 350.7L684.2 350.1L684.7 349.4L685.2 348.8L685.8 348.2L686.3 347.5L686.9 346.9L687.5 346.3L688.1 345.7L688.7 345.1L689.3 344.5L690.0 343.9L690.6 343.4L691.3 342.8L691.9 342.3L692.6 341.7L693.3 341.2L694.0 340.7L694.7 340.2L695.4 339.7L696.1 339.2L696.8 338.7L697.6 338.2L698.3 337.8L699.0 337.3L699.8 336.9L700.6 336.5L701.4 336.0L702.1 335.6L702.9 335.2L703.7 334.9L704.5 334.5L705.4 334.1L705.6 334.0L705.5 333.3L705.2 331.8L704.8 330.2L704.4 328.7L704.0 327.1L703.6 325.6L703.1 324.0L702.7 322.5L702.2 321.0L701.7 319.5L701.1 317.9L700.6 316.4L700.0 314.9L699.4 313.4L698.8 311.9L698.2 310.5L697.5 309.0L696.8 307.5L696.1 306.1L695.4 304.6L694.6 303.2L693.9 301.7L693.1 300.3L692.3 298.9L691.5 297.5L690.6 296.1L689.8 294.7L688.9 293.3L688.0 291.9L687.0 290.6L686.1 289.2L685.1 287.9L684.2 286.6L683.2 285.2L682.4 284.2L682.1 284.3L681.2 284.6L680.4 284.8L679.5 285.1L678.6 285.3L677.7 285.5L676.9 285.7L676.0 285.9L675.1 286.0L674.2 286.2L673.3 286.3L672.4 286.5L671.5 286.6L670.6 286.7L669.7 286.8L668.8 286.8L667.9 286.9L667.0 287.0L666.1 287.0L665.2 287.0L664.3 287.1L663.4 287.1L662.5 287.0L661.6 287.0L660.7 287.0L659.8 286.9L658.9 286.9L658.0 286.8L657.1 286.7L656.2 286.6L655.3 286.5L654.4 286.4L653.5 286.2L652.6 286.1L651.7 285.9L650.9 285.7L650.0 285.5L649.1 285.3L648.3 285.1L647.4 284.9L646.5 284.7L645.7 284.4L644.8 284.1L644.0 283.9L643.2 283.6L642.3 283.3L641.5 283.0L640.7 282.7L639.9 282.3L639.1 282.0L638.3 281.6L637.5 281.2L636.7 280.9L635.9 280.5L635.2 280.1L634.4 279.7L633.7 279.2L632.9 278.8L632.2 278.3L631.5 277.9L630.7 277.4L630.0 276.9L629.3 276.5L628.6 276.0L628.0 275.5L627.3 274.9L626.6 274.4L626.0 273.9L625.3 273.3L624.7 272.8L624.1 272.2L623.5 271.6L622.9 271.1L622.3 270.5L621.7 269.9L621.2 269.3L620.6 268.6L620.1 268.0L619.6 267.4L619.1 266.8L618.6 266.1L618.1 265.5L617.6 264.8L617.1 264.1L616.7 263.5L616.2 262.8L615.8 262.1L615.4 261.4L615.0 260.7L614.6 260.0L614.2 259.3L613.9 258.6L613.5 257.8L613.2 257.1L612.9 256.4L612.6 255.6L612.3 254.9L612.0 254.2L611.8 253.4L611.5 252.7L611.3 251.9L611.1 251.1L610.9 250.4L610.7 249.6L610.5 248.9L610.3 248.1L610.2 247.3L610.1 246.5L609.9 245.8L609.8 245.0L609.8 244.2L609.7 243.4L609.6 242.6L609.6 241.8L609.6 241.1L609.5 240.3L609.5 239.5L609.6 238.7L609.6 237.9L609.6 237.1L609.7 236.3L609.7 236.1L609.6 236.0L607.8 235.5L606.1 235.0L604.4 234.6L602.6 234.1L600.9 233.7L599.1 233.3L597.3 232.9L595.6 232.5L593.8 232.2L592.0 231.8L590.2 231.5L588.4 231.2L586.6 230.9L584.8 230.7L583.0 230.4L581.2 230.2L579.4 230.0L577.6 229.8L575.7 229.7L573.9 229.5L572.1 229.4L570.3 229.3Z" fill="#1b2223" opacity=".5"/>
<path d="M633.2 425.0L639.9 425.9L646.4 427.4L652.7 429.3L658.9 431.8L664.7 434.7L670.2 438.0L675.4 441.7L680.1 445.9L684.4 450.3L688.2 455.1L691.6 460.2L694.4 465.5L696.6 471.0L698.3 476.7L699.4 482.5L700.0 488.4L699.9 494.3L699.2 500.2L698.0 506.0L696.2 511.7L693.8 517.2L690.9 522.6L687.4 527.7L683.5 532.6L679.1 537.2L674.2 541.4L669.0 545.2L663.4 548.6L657.5 551.6L651.3 554.2L644.9 556.3L638.3 557.9L631.6 558.9L624.9 559.5L618.1 559.6L611.4 559.1L604.7 558.2L598.2 556.7L591.8 554.7L585.7 552.3L579.9 549.4L574.3 546.1L569.2 542.3L564.4 538.2L560.1 533.7L556.3 528.9L553.0 523.9L550.2 518.6L547.9 513.0L546.2 507.4L545.1 501.6L544.6 495.7L544.7 489.8L545.3 483.9L546.6 478.1L548.4 472.4L550.8 466.8L553.7 461.5L557.1 456.3L561.1 451.5L565.5 446.9L570.3 442.7L575.6 438.9L581.2 435.4L587.1 432.4L593.2 429.9L599.6 427.8L606.2 426.2L612.9 425.1L619.7 424.6L626.4 424.5Z" fill="#606a69" stroke="#454e4d" stroke-width="0.7" />
<path d="M632.1 431.4L638.2 432.3L644.1 433.6L649.8 435.4L655.3 437.6L660.6 440.2L665.6 443.2L670.3 446.6L674.5 450.3L678.4 454.4L681.9 458.7L684.9 463.3L687.4 468.1L689.5 473.1L691.0 478.2L692.0 483.4L692.5 488.7L692.4 494.1L691.8 499.4L690.7 504.6L689.1 509.8L686.9 514.8L684.3 519.7L681.1 524.3L677.6 528.7L673.6 532.8L669.2 536.6L664.5 540.1L659.4 543.2L654.1 545.9L648.5 548.2L642.7 550.1L636.8 551.5L630.7 552.5L624.6 553.0L618.5 553.1L612.4 552.7L606.4 551.8L600.5 550.5L594.7 548.7L589.2 546.5L583.9 543.9L578.9 540.9L574.3 537.5L570.0 533.8L566.1 529.7L562.6 525.4L559.6 520.8L557.1 516.0L555.1 511.0L553.5 505.9L552.5 500.7L552.1 495.4L552.1 490.0L552.7 484.7L553.8 479.5L555.5 474.3L557.6 469.3L560.3 464.4L563.4 459.8L567.0 455.4L571.0 451.3L575.3 447.5L580.1 444.0L585.1 440.9L590.5 438.2L596.0 435.9L601.8 434.0L607.8 432.6L613.8 431.6L619.9 431.1L626.0 431.0Z" fill="#6a7473" stroke="#49524f" stroke-width="0.7" />
<path d="M514.0 460.0L514.0 476.0L514.1 488.9L514.3 498.6L514.6 505.2L514.9 508.8L515.6 512.3L516.4 515.9L517.6 519.6L518.9 523.4L520.7 526.9L522.7 530.1L525.1 533.1L527.9 535.9L530.9 538.2L534.1 540.2L537.6 541.7L541.4 542.8L544.9 543.4L548.3 543.6L551.5 543.2L554.5 542.3L557.2 541.0L559.6 539.3L561.6 537.2L563.4 534.8L564.7 531.9L565.7 528.8L566.2 525.4L566.3 521.6L566.1 517.5L565.4 513.0L564.4 508.1L563.1 502.9L561.8 497.9L560.8 493.1L559.9 488.6L559.1 484.4L558.5 478.8L557.9 471.9L557.4 463.8L557.1 454.2L554.1 446.9L548.6 441.6L540.6 438.5L529.9 437.5L522.0 440.8L516.7 448.2Z" fill="#7d8786" stroke="#59625f" stroke-width=".7"/>
<path d="M630.5 441.7L635.5 442.5L640.4 443.6L645.1 445.0L649.7 446.8L654.1 449.0L658.2 451.5L662.1 454.3L665.6 457.4L668.9 460.8L671.8 464.4L674.3 468.2L676.4 472.2L678.0 476.3L679.3 480.6L680.1 484.9L680.5 489.3L680.5 493.7L680.0 498.1L679.1 502.5L677.7 506.8L675.9 510.9L673.7 515.0L671.1 518.8L668.2 522.5L664.9 525.9L661.2 529.0L657.3 531.9L653.1 534.5L648.7 536.7L644.0 538.7L639.2 540.2L634.3 541.4L629.3 542.2L624.2 542.6L619.1 542.7L614.1 542.4L609.1 541.6L604.2 540.5L599.4 539.1L594.8 537.2L590.5 535.1L586.3 532.6L582.5 529.8L578.9 526.7L575.7 523.3L572.8 519.7L570.3 515.9L568.2 511.9L566.5 507.8L565.2 503.5L564.4 499.2L564.0 494.8L564.1 490.4L564.6 486.0L565.5 481.6L566.9 477.3L568.6 473.1L570.8 469.1L573.4 465.3L576.4 461.6L579.7 458.2L583.3 455.0L587.2 452.2L591.4 449.6L595.9 447.3L600.5 445.4L605.3 443.9L610.2 442.7L615.2 441.9L620.3 441.4L625.4 441.4Z" fill="#828c8b" stroke="#4c5553" stroke-width="0.7" />
<path d="M423.1 295.3L427.2 298.7L430.1 301.7L432.7 304.9L435.5 308.9L437.7 313.1L439.7 318.3L440.3 320.4L440.1 323.4L439.0 329.6L436.9 335.7L433.9 341.5L430.1 346.9L425.5 351.9L420.2 356.3L414.3 360.1L408.4 363.0L409.9 375.7L411.3 381.9L413.2 388.8L415.9 387.8L415.3 386.4L477.1 364.0L480.0 363.6L481.9 363.6L484.8 364.0L486.7 364.5L489.2 365.7L490.8 366.7L492.7 368.5L494.1 370.5L492.9 373.3L491.3 375.4L489.2 377.3L485.9 379.2L423.2 402.0L422.4 400.7L423.8 412.7L427.3 418.4L431.8 424.8L438.3 423.1L445.5 422.2L452.8 422.0L459.9 422.6L466.9 424.1L473.6 426.3L479.8 429.3L485.4 433.0L490.4 437.4L494.2 441.6L497.4 446.2L499.9 451.2L501.7 456.5L501.3 460.9L502.7 472.9L509.7 474.9L518.2 476.8L520.5 465.5L519.6 465.3L530.2 416.2L531.4 413.8L532.4 412.3L535.1 409.8L538.4 407.9L542.1 406.7L545.1 406.5L547.0 406.6L549.9 407.1L551.7 407.7L554.1 409.1L555.5 410.2L556.8 411.4L558.1 413.3L546.4 467.9L547.8 479.9L556.7 479.8L564.3 479.4L566.3 473.8L569.3 467.9L573.2 462.4L577.2 457.9L582.4 453.3L588.2 449.3L594.5 445.9L600.4 443.5L607.4 441.5L613.7 440.4L621.0 440.0L627.3 440.2L634.4 441.3L640.4 442.9L646.1 445.0L651.7 447.9L659.8 441.7L664.0 438.0L662.7 426.0L661.7 426.9L611.2 392.9L609.8 391.8L608.0 389.8L607.2 388.6L607.9 386.6L609.4 384.3L611.3 382.3L612.8 381.2L616.2 379.5L620.0 378.5L622.9 378.4L626.7 379.1L630.2 380.5L676.6 411.6L675.9 412.5L683.1 417.2L687.4 411.0L691.3 404.7L689.9 392.7L686.5 389.8L683.6 386.9L680.9 383.8L678.2 379.8L675.8 375.6L674.0 371.2L673.0 367.8L673.1 365.4L674.2 359.1L676.1 353.0L678.9 347.2L682.6 341.7L687.1 336.7L692.2 332.2L698.0 328.3L704.6 325.0L703.3 313.0L701.6 306.1L700.0 300.7L636.2 324.1L632.3 324.5L628.4 324.1L624.8 322.9L621.8 320.8L620.5 319.6L619.0 317.5L619.4 316.4L620.6 314.1L622.3 312.0L623.7 310.8L626.1 309.3L689.6 285.8L688.4 275.3L684.7 269.6L680.0 263.2L673.6 264.9L666.4 265.8L659.2 266.0L652.0 265.4L645.0 263.9L638.3 261.7L632.0 258.7L626.3 255.0L621.7 251.2L617.7 247.0L613.9 241.8L611.2 236.8L609.7 233.2L608.5 229.6L608.7 227.1L607.3 215.1L607.2 215.0L605.5 214.5L603.7 214.0L600.2 213.1L592.1 211.3L582.4 271.1L581.5 273.5L579.5 276.5L577.5 278.3L574.2 280.2L571.5 281.2L568.6 281.6L565.6 281.6L562.8 281.0L560.1 280.0L557.8 278.5L555.8 276.7L554.2 274.4L563.3 218.6L562.1 208.1L553.2 208.2L545.7 208.6L544.0 214.2L541.7 219.3L538.7 224.2L535.1 228.8L530.2 233.6L525.5 237.3L520.3 240.5L514.7 243.2L507.9 245.6L500.9 247.2L493.7 247.9L486.5 247.9L479.3 247.1L472.4 245.4L465.8 243.0L460.1 240.1L453.6 245.2L448.1 250.0L449.3 260.5L501.7 295.2L504.4 297.6L505.9 299.7L505.6 300.7L503.8 303.8L501.9 305.8L500.4 306.9L498.8 307.9L496.1 309.0L492.3 309.7L488.4 309.5L485.6 308.8L483.9 308.0L429.0 271.8L425.5 277.0L421.7 283.3ZM607.3 215.8L607.3 215.8L607.2 215.0ZM685.6 399.6L685.5 399.5L685.6 399.6ZM606.8 393.7L606.8 393.7L607.1 395.6Z" fill="#053a56" />
<defs><linearGradient id="gss0" gradientUnits="userSpaceOnUse" x1="565.5" y1="279.9" x2="576.0" y2="215.4"><stop offset="0" stop-color="#14191a" stop-opacity="0.90"/><stop offset="0.35" stop-color="#14191a" stop-opacity="0.90"/><stop offset="0.60" stop-color="#14191a" stop-opacity="0.90"/></linearGradient></defs>
<path d="M589.6 210.8L587.8 210.5L586.0 210.2L584.2 209.9L582.4 209.7L580.6 209.4L578.8 209.2L577.0 209.0L575.2 208.8L573.4 208.7L571.5 208.5L569.7 208.4L567.9 208.3L566.1 208.2L565.0 208.2L554.2 274.4L554.3 274.5L554.7 275.3L555.2 276.0L555.8 276.7L556.4 277.3L557.1 277.9L557.8 278.5L558.5 279.0L559.3 279.5L560.1 280.0L561.0 280.4L561.9 280.7L562.8 281.0L563.7 281.2L564.7 281.4L565.6 281.6L566.6 281.6L567.6 281.6L568.6 281.6L569.5 281.5L570.5 281.4L571.5 281.2L572.4 280.9L573.3 280.6L574.2 280.2L575.1 279.8L575.9 279.4L576.7 278.9L577.5 278.3L578.2 277.7L578.9 277.1L579.5 276.5L580.1 275.8L580.6 275.0L581.1 274.3L581.5 273.5L581.8 272.7L582.1 271.9L582.4 271.1L582.5 270.2L592.1 211.3L591.4 211.2Z" fill="url(#gss0)" />
<path d="M565.0 208.2L562.5 208.1L552.9 267.1L552.8 268.8L552.9 270.5L553.3 272.1L554.2 274.4Z" fill="#5a6260" />
<path d="M548.2 266.1L548.3 269.4L548.7 271.6L549.5 273.7L551.3 276.6L552.8 278.3L554.6 279.9L556.6 281.2L559.9 282.7L562.3 283.4L566.1 283.9L569.9 283.8L572.4 283.3L576.0 282.1L578.2 281.0L580.2 279.6L582.8 277.2L584.3 275.3L585.4 273.3L586.6 270.2L596.1 212.1L592.1 211.3L582.5 270.2L581.8 272.7L580.6 275.0L579.5 276.5L577.5 278.3L575.9 279.4L573.3 280.6L570.5 281.4L567.6 281.6L565.6 281.6L563.7 281.2L561.0 280.4L559.3 279.5L557.1 277.9L555.2 276.0L554.3 274.5L553.5 273.0L552.9 270.5L552.8 268.8L552.9 267.1L562.5 208.1L557.6 208.1Z" fill="#d3d3cb" />
<path d="M548.3 265.0L548.1 267.2L548.5 270.5L549.5 273.7L550.6 275.7L552.0 277.5L554.6 279.9L556.6 281.2L559.9 282.7L562.3 283.4L566.1 283.9L569.9 283.8L572.4 283.3L576.0 282.1L578.2 281.0L580.2 279.6L582.8 277.2L584.3 275.3L585.4 273.3L586.6 270.2L596.1 212.1L586.0 210.2L577.0 209.0L567.9 208.3L557.6 208.1Z" fill="none" stroke="#7d8682" stroke-width=".5"/>
<defs><linearGradient id="gss1" gradientUnits="userSpaceOnUse" x1="618.4" y1="315.1" x2="687.7" y2="289.6"><stop offset="0" stop-color="#14191a" stop-opacity="0.88"/><stop offset="0.35" stop-color="#14191a" stop-opacity="0.88"/><stop offset="0.70" stop-color="#14191a" stop-opacity="0.55"/></linearGradient></defs>
<path d="M699.3 298.5L698.8 296.9L698.2 295.4L697.6 293.9L697.0 292.4L696.4 290.9L695.8 289.5L695.1 288.0L694.4 286.5L693.7 285.1L693.4 284.4L627.9 308.5L627.0 308.9L626.1 309.3L625.3 309.7L624.5 310.2L623.7 310.8L623.0 311.4L622.3 312.0L621.7 312.7L621.1 313.4L620.6 314.1L620.1 314.8L619.7 315.6L619.4 316.4L619.1 317.2L619.0 317.5L619.4 318.2L619.9 318.9L620.5 319.6L621.1 320.2L621.8 320.8L622.5 321.4L623.2 321.9L624.0 322.4L624.8 322.9L625.7 323.3L626.6 323.6L627.5 323.9L628.4 324.1L629.4 324.3L630.4 324.5L631.3 324.5L632.3 324.5L633.3 324.5L634.3 324.4L635.2 324.3L636.2 324.1L637.1 323.8L638.0 323.5L700.0 300.7L699.8 300.0Z" fill="url(#gss1)" />
<path d="M693.4 284.4L689.2 276.7L626.0 300.0L623.5 301.3L621.3 303.1L619.6 305.2L618.3 307.5L617.7 310.0L617.5 311.7L617.8 314.2L618.6 316.7L619.0 317.5L620.1 314.8L621.7 312.7L623.7 310.8L625.3 309.7L627.0 308.9Z" fill="#7a817e" />
<path d="M623.9 294.9L620.6 296.7L618.7 298.1L616.2 300.7L614.9 302.6L613.9 304.7L613.0 307.9L612.9 311.2L613.2 313.4L614.2 316.6L615.3 318.6L616.7 320.4L619.3 322.8L621.3 324.1L623.5 325.2L627.1 326.3L629.5 326.7L633.3 326.8L635.9 326.5L638.3 325.9L700.8 303.0L700.0 300.7L638.0 323.5L635.2 324.3L633.3 324.5L630.4 324.5L627.5 323.9L624.8 322.9L622.5 321.4L621.1 320.2L619.9 318.9L618.6 316.7L617.8 314.2L617.5 312.5L617.7 310.0L618.1 308.3L618.7 306.7L620.1 304.5L622.0 302.5L623.5 301.3L625.1 300.4L626.9 299.6L689.2 276.7L686.2 271.9Z" fill="#d3d3cb" />
<path d="M625.0 294.4L622.7 295.4L619.6 297.4L617.8 299.0L615.5 301.7L613.9 304.7L613.2 306.8L612.8 310.1L613.0 312.3L613.8 315.6L614.8 317.6L616.7 320.4L618.4 322.0L620.3 323.5L623.5 325.2L627.1 326.3L629.5 326.7L633.3 326.8L635.9 326.5L638.3 325.9L700.8 303.0L697.6 293.9L694.4 286.5L690.7 279.3L686.2 271.9Z" fill="none" stroke="#7d8682" stroke-width=".5"/>
<path d="M663.8 425.0L665.0 423.8L666.3 422.6L667.6 421.4L668.8 420.2L670.0 419.0L671.2 417.7L672.4 416.4L673.6 415.2L674.7 413.9L675.8 412.6L676.6 411.6L631.0 381.0L630.2 380.5L629.4 380.1L628.5 379.7L627.7 379.3L626.7 379.1L625.8 378.8L624.9 378.6L623.9 378.5L622.9 378.4L621.9 378.4L621.0 378.4L620.0 378.5L619.0 378.7L618.1 378.9L617.1 379.1L616.2 379.5L615.3 379.8L614.4 380.2L613.6 380.7L612.8 381.2L612.0 381.7L611.3 382.3L610.6 382.9L610.0 383.6L609.4 384.3L608.8 385.0L608.4 385.8L607.9 386.6L607.6 387.4L607.3 388.2L607.2 388.6L607.5 389.1L608.0 389.8L608.5 390.5L609.1 391.2L609.8 391.8L610.5 392.4L611.2 392.9L661.7 426.9L662.4 426.2Z" fill="#778180" />
<defs><linearGradient id="gss2" gradientUnits="userSpaceOnUse" x1="608.8" y1="373.1" x2="667.0" y2="412.1"><stop offset="0" stop-color="#14191a" stop-opacity="0.95"/><stop offset="0.12" stop-color="#14191a" stop-opacity="0.95"/><stop offset="0.38" stop-color="#14191a" stop-opacity="0.00"/></linearGradient></defs>
<path d="M663.8 425.0L665.0 423.8L666.3 422.6L667.6 421.4L668.8 420.2L670.0 419.0L671.2 417.7L672.4 416.4L673.6 415.2L674.7 413.9L675.8 412.6L676.6 411.6L631.0 381.0L630.2 380.5L629.4 380.1L628.5 379.7L627.7 379.3L626.7 379.1L625.8 378.8L624.9 378.6L623.9 378.5L622.9 378.4L621.9 378.4L621.0 378.4L620.0 378.5L619.0 378.7L618.1 378.9L617.1 379.1L616.2 379.5L615.3 379.8L614.4 380.2L613.6 380.7L612.8 381.2L612.0 381.7L611.3 382.3L610.6 382.9L610.0 383.6L609.4 384.3L608.8 385.0L608.4 385.8L607.9 386.6L607.6 387.4L607.3 388.2L607.2 388.6L607.5 389.1L608.0 389.8L608.5 390.5L609.1 391.2L609.8 391.8L610.5 392.4L611.2 392.9L661.7 426.9L662.4 426.2Z" fill="url(#gss2)" />
<path d="M676.6 411.6L680.9 406.3L630.0 372.1L628.4 371.2L625.7 370.2L623.9 369.7L621.9 369.5L619.0 369.6L616.1 370.2L613.4 371.3L611.0 372.8L609.0 374.7L607.8 376.1L606.9 377.7L606.0 380.1L605.7 381.8L605.7 383.5L606.1 386.0L607.2 388.6L608.4 385.8L610.0 383.6L611.3 382.3L612.8 381.2L615.3 379.8L617.1 379.1L619.0 378.7L621.9 378.4L624.9 378.6L627.7 379.3L629.4 380.1L631.0 381.0Z" fill="#6f7775" />
<path d="M631.6 366.8L629.4 365.7L627.1 364.9L624.6 364.3L620.8 364.0L618.3 364.2L614.6 365.0L612.2 365.8L608.9 367.6L607.0 369.1L604.5 371.7L603.2 373.6L601.8 376.7L601.1 380.0L601.0 382.2L601.5 385.4L602.3 387.5L603.4 389.5L604.7 391.3L607.2 393.7L659.3 428.9L661.7 426.9L611.2 392.9L609.1 391.2L608.0 389.8L606.7 387.6L606.1 386.0L605.7 383.5L605.8 380.9L606.6 378.5L607.8 376.1L609.0 374.7L611.0 372.8L612.6 371.8L615.2 370.6L617.1 370.0L620.0 369.5L621.9 369.5L624.8 369.9L626.6 370.4L628.4 371.2L630.0 372.1L680.9 406.3L684.1 401.9Z" fill="#d3d3cb" />
<path d="M632.6 367.4L630.5 366.2L627.1 364.9L624.6 364.3L620.8 364.0L618.3 364.2L614.6 365.0L612.2 365.8L608.9 367.6L607.0 369.1L604.5 371.7L603.2 373.6L601.8 376.7L601.1 380.0L601.0 382.2L601.5 385.4L602.3 387.5L603.4 389.5L604.7 391.3L607.2 393.7L659.3 428.9L666.3 422.6L672.4 416.4L678.0 409.9L684.1 401.9Z" fill="none" stroke="#7d8682" stroke-width=".5"/>
<defs><linearGradient id="gss3" gradientUnits="userSpaceOnUse" x1="545.8" y1="396.1" x2="532.9" y2="460.6"><stop offset="0" stop-color="#14191a" stop-opacity="0.95"/><stop offset="0.16" stop-color="#14191a" stop-opacity="0.95"/><stop offset="0.42" stop-color="#14191a" stop-opacity="0.00"/></linearGradient></defs>
<path d="M520.7 465.5L522.5 465.8L524.3 466.1L526.1 466.3L527.9 466.6L529.7 466.8L531.5 467.0L533.3 467.2L535.1 467.3L537.0 467.5L538.8 467.6L540.6 467.7L542.5 467.8L544.3 467.9L546.1 467.9L546.3 467.9L558.1 413.3L557.8 412.8L557.3 412.1L556.8 411.4L556.2 410.8L555.5 410.2L554.8 409.6L554.1 409.1L553.3 408.6L552.5 408.1L551.7 407.7L550.8 407.4L549.9 407.1L548.9 406.9L548.0 406.7L547.0 406.6L546.1 406.5L545.1 406.5L544.1 406.5L543.1 406.6L542.1 406.7L541.2 406.9L540.2 407.2L539.3 407.5L538.4 407.9L537.5 408.3L536.7 408.7L535.9 409.2L535.1 409.8L534.3 410.4L533.6 411.0L533.0 411.6L532.4 412.3L531.9 413.1L531.4 413.8L530.9 414.6L530.5 415.4L530.2 416.2L530.0 417.0L529.8 417.9L519.6 465.3Z" fill="url(#gss3)" />
<path d="M516.7 464.8L519.6 465.3L530.0 417.0L530.9 414.6L532.4 412.3L533.6 411.0L535.1 409.8L536.7 408.7L538.4 407.9L540.2 407.2L542.1 406.7L544.1 406.5L546.1 406.5L548.0 406.7L549.9 407.1L551.7 407.7L553.3 408.6L554.8 409.6L556.2 410.8L557.3 412.1L558.1 413.3L558.5 411.3L558.6 409.6L558.4 407.9L557.6 405.5L556.8 403.9L555.2 401.9L553.8 400.7L551.5 399.2L548.9 398.2L547.0 397.8L545.0 397.6L542.1 397.7L539.2 398.3L536.5 399.4L534.1 400.9L532.0 402.7L530.8 404.2L529.9 405.7L529.2 407.3L528.8 409.0Z" fill="#8a908c" />
<path d="M562.8 409.9L562.9 407.7L562.6 405.5L562.1 403.4L560.6 400.3L559.3 398.5L556.7 396.1L554.8 394.8L551.4 393.3L549.0 392.6L545.3 392.1L542.7 392.1L539.0 392.7L536.5 393.4L533.1 395.0L531.0 396.4L528.3 398.8L526.2 401.6L525.1 403.7L524.4 405.8L511.9 463.7L516.7 464.8L528.8 409.0L529.2 407.3L529.9 405.7L531.4 403.4L532.6 402.1L534.8 400.3L536.5 399.4L539.2 398.3L541.1 397.8L544.1 397.6L546.0 397.7L548.9 398.2L551.5 399.2L553.8 400.7L555.2 401.9L556.8 403.9L557.6 405.5L558.4 407.9L558.6 409.6L558.4 412.1L546.3 467.9L550.3 467.9Z" fill="#d3d3cb" />
<path d="M562.6 411.0L562.9 408.8L562.6 405.5L562.1 403.4L560.6 400.3L559.3 398.5L556.7 396.1L554.8 394.8L551.4 393.3L549.0 392.6L545.3 392.1L542.7 392.1L539.0 392.7L536.5 393.4L533.1 395.0L531.0 396.4L528.3 398.8L526.2 401.6L525.1 403.7L524.4 405.8L511.9 463.7L522.5 465.8L531.5 467.0L540.6 467.7L550.3 467.9Z" fill="none" stroke="#7d8682" stroke-width=".5"/>
<defs><linearGradient id="gss4" gradientUnits="userSpaceOnUse" x1="493.4" y1="360.9" x2="423.5" y2="386.4"><stop offset="0" stop-color="#14191a" stop-opacity="0.90"/><stop offset="0.30" stop-color="#14191a" stop-opacity="0.80"/><stop offset="0.70" stop-color="#14191a" stop-opacity="0.30"/></linearGradient></defs>
<path d="M415.4 386.5L416.0 388.0L416.7 389.5L417.3 390.9L418.0 392.4L418.7 393.8L419.5 395.3L420.2 396.7L421.0 398.1L421.7 399.5L422.5 400.9L423.2 402.0L485.0 379.6L485.9 379.2L486.8 378.8L487.7 378.4L488.5 377.9L489.2 377.3L490.0 376.7L490.7 376.1L491.3 375.4L491.9 374.7L492.4 374.0L492.9 373.3L493.3 372.5L493.7 371.7L494.0 370.9L494.1 370.5L493.8 369.9L493.3 369.2L492.7 368.5L492.1 367.9L491.5 367.3L490.8 366.7L490.0 366.2L489.2 365.7L488.4 365.2L487.5 364.8L486.7 364.5L485.8 364.2L484.8 364.0L483.9 363.8L482.9 363.6L481.9 363.6L481.0 363.6L480.0 363.6L479.0 363.7L478.0 363.8L477.1 364.0L476.1 364.3L475.2 364.6L415.3 386.4Z" fill="url(#gss4)" />
<path d="M412.3 378.2L415.3 386.4L475.2 364.6L477.1 364.0L480.0 363.6L481.9 363.6L484.8 364.0L486.7 364.5L489.2 365.7L490.8 366.7L492.7 368.5L494.1 370.5L494.4 369.2L494.6 367.5L494.4 365.0L493.6 362.5L492.3 360.3L490.5 358.4L488.2 356.8L485.7 355.6L482.9 354.9L480.0 354.7L477.0 354.9L474.2 355.7Z" fill="#838a86" />
<path d="M487.6 381.1L490.9 379.3L492.9 377.9L495.4 375.3L496.7 373.4L498.2 370.2L498.7 368.1L498.9 365.9L498.8 363.7L498.4 361.5L497.1 358.4L495.9 356.5L493.5 354.0L491.6 352.5L488.4 350.8L486.1 350.0L482.4 349.3L478.6 349.2L476.1 349.5L473.6 350.1L410.7 373.0L412.3 378.2L474.2 355.7L476.1 355.1L478.0 354.8L480.0 354.7L482.9 354.9L485.7 355.6L487.4 356.3L489.8 357.8L491.1 359.0L492.8 361.0L493.6 362.5L494.4 365.0L494.6 366.7L494.4 369.2L494.0 370.9L493.3 372.5L491.9 374.7L490.0 376.7L487.7 378.4L485.0 379.6L423.2 402.0L424.4 404.0Z" fill="#d3d3cb" />
<path d="M486.5 381.6L489.9 380.0L491.9 378.6L494.6 376.2L496.1 374.3L497.8 371.3L498.5 369.2L498.9 367.0L498.8 363.7L498.4 361.5L497.1 358.4L495.9 356.5L493.5 354.0L491.6 352.5L488.4 350.8L486.1 350.0L482.4 349.3L478.6 349.2L476.1 349.5L473.6 350.1L410.7 373.0L413.7 382.1L416.7 389.5L420.2 396.7L424.4 404.0Z" fill="none" stroke="#7d8682" stroke-width=".5"/>
<defs><linearGradient id="gss5" gradientUnits="userSpaceOnUse" x1="503.0" y1="302.9" x2="444.2" y2="263.9"><stop offset="0" stop-color="#14191a" stop-opacity="0.55"/><stop offset="0.35" stop-color="#14191a" stop-opacity="0.45"/><stop offset="0.70" stop-color="#14191a" stop-opacity="0.20"/></linearGradient></defs>
<path d="M442.2 255.8L441.0 257.0L439.9 258.3L438.7 259.6L437.6 260.8L436.5 262.1L435.4 263.4L434.3 264.7L433.2 266.1L432.2 267.4L431.2 268.7L430.2 270.1L429.2 271.5L429.0 271.8L482.2 307.1L483.0 307.6L483.9 308.0L484.7 308.4L485.6 308.8L486.5 309.0L487.4 309.3L488.4 309.5L489.4 309.6L490.3 309.7L491.3 309.7L492.3 309.7L493.3 309.6L494.2 309.4L495.2 309.2L496.1 309.0L497.0 308.6L497.9 308.3L498.8 307.9L499.6 307.4L500.4 306.9L501.2 306.4L501.9 305.8L502.6 305.2L503.2 304.5L503.8 303.8L504.3 303.1L504.8 302.3L505.2 301.5L505.6 300.7L505.9 299.9L505.9 299.7L505.5 299.0L505.0 298.3L504.4 297.6L503.8 296.9L503.1 296.3L502.4 295.7L501.7 295.2L442.2 255.8Z" fill="url(#gss5)" />
<path d="M447.2 250.9L442.2 255.8L501.7 295.2L503.8 296.9L505.0 298.3L505.9 299.7L506.4 297.4L506.4 295.7L506.2 294.0L505.7 292.4L504.9 290.8L504.0 289.4L502.8 288.0L501.4 286.8Z" fill="#6f7775" />
<path d="M480.3 309.2L482.5 310.3L486.1 311.5L488.6 311.9L492.4 311.9L496.1 311.4L498.5 310.6L500.8 309.6L503.0 308.4L504.9 306.9L507.3 304.3L509.2 301.4L510.0 299.3L510.7 296.0L510.7 293.8L510.1 290.6L509.3 288.5L507.5 285.6L506.0 283.8L504.2 282.3L451.3 247.1L447.2 250.9L500.7 286.3L502.1 287.4L503.4 288.7L504.9 290.8L505.7 292.4L506.2 294.0L506.4 296.6L506.1 299.1L505.6 300.7L504.3 303.1L503.2 304.5L501.9 305.8L499.6 307.4L497.0 308.6L494.2 309.4L491.3 309.7L489.4 309.6L486.5 309.0L484.7 308.4L482.2 307.1L429.0 271.8L427.3 274.2Z" fill="#d3d3cb" />
<path d="M479.3 308.6L482.5 310.3L484.8 311.1L488.6 311.9L491.1 312.0L494.9 311.6L497.3 311.0L500.8 309.6L503.0 308.4L504.9 306.9L507.3 304.3L509.2 301.4L510.0 299.3L510.7 296.0L510.7 293.8L510.1 290.6L509.3 288.5L507.5 285.6L506.0 283.8L504.2 282.3L451.3 247.1L444.6 253.4L438.7 259.6L433.2 266.1L427.3 274.2Z" fill="none" stroke="#7d8682" stroke-width=".5"/>
<path d="M557.6 208.1L545.7 208.6L544.0 214.2L542.8 217.2L541.3 220.1L539.6 222.9L537.7 225.6L535.6 228.2L533.3 230.7L528.9 234.7L524.0 238.3L518.7 241.3L513.9 243.5L510.5 244.8L507.1 245.8L500.9 247.2L497.3 247.7L493.7 247.9L490.1 248.0L486.5 247.9L482.9 247.6L479.3 247.1L475.8 246.3L472.4 245.4L469.0 244.3L465.8 243.0L460.1 240.1L456.3 243.0L451.3 247.1L503.3 281.6L505.2 283.0L506.8 284.7L508.2 286.5L509.3 288.5L510.1 290.6L510.6 292.7L510.7 296.0L510.3 298.2L509.6 300.4L508.0 303.4L505.8 306.1L503.0 308.4L499.7 310.2L496.1 311.4L492.4 311.9L488.6 311.9L484.8 311.1L482.5 310.3L479.3 308.6L427.3 274.2L424.6 278.4L421.7 283.3L426.4 287.3L428.7 289.7L430.9 292.2L432.8 294.8L434.5 297.6L436.0 300.4L437.3 303.3L438.4 306.3L439.2 309.3L439.8 312.4L440.2 315.5L440.4 318.7L440.3 321.8L439.9 325.0L439.4 328.1L437.8 333.5L435.5 338.6L432.6 343.6L430.6 346.3L428.5 348.8L424.2 353.1L419.5 356.8L414.3 360.1L408.4 363.0L409.5 368.3L410.7 373.0L472.4 350.5L474.8 349.8L477.3 349.3L479.9 349.2L483.6 349.4L486.1 350.0L488.4 350.8L490.6 351.9L492.6 353.2L494.4 354.8L496.5 357.4L498.0 360.4L498.8 363.7L498.9 367.0L498.2 370.2L496.7 373.4L494.6 376.2L491.9 378.6L489.9 380.0L486.5 381.6L424.5 404.1L427.8 409.1L430.4 412.8L436.9 411.1L440.5 410.5L444.1 410.2L450.5 410.0L454.1 410.1L457.7 410.5L461.2 411.1L464.7 411.9L470.6 413.7L473.8 415.0L476.9 416.5L482.0 419.6L484.7 421.5L487.3 423.7L491.3 427.7L493.3 430.2L495.2 432.9L497.9 437.7L499.1 440.6L500.1 443.6L501.3 448.9L501.6 452.0L501.7 455.2L501.6 458.3L501.3 460.9L506.6 462.4L512.5 463.9L524.2 406.9L525.1 403.7L526.8 400.7L528.3 398.8L530.1 397.1L533.1 395.0L535.3 393.9L537.7 393.0L541.5 392.2L545.3 392.1L547.8 392.3L550.3 392.9L553.7 394.2L556.7 396.1L558.5 397.7L560.0 399.4L561.7 402.3L562.6 405.5L562.9 408.8L562.6 411.0L551.0 467.9L553.5 467.9L562.9 467.4L564.9 461.8L566.3 458.8L568.0 455.9L569.8 453.1L571.8 450.4L575.8 445.9L578.3 443.5L581.0 441.3L586.1 437.7L589.2 435.9L592.4 434.3L598.2 431.8L601.6 430.7L605.2 429.7L611.4 428.6L615.1 428.2L618.7 428.0L625.0 428.1L628.6 428.5L632.2 429.1L638.2 430.6L641.5 431.7L644.7 433.0L650.3 435.9L654.3 433.0L659.4 428.9L608.2 394.4L606.3 393.0L604.7 391.3L603.4 389.5L602.3 387.5L601.5 385.4L601.1 383.3L601.0 381.1L601.5 377.8L602.2 375.6L603.8 372.6L606.1 369.9L608.9 367.6L612.2 365.8L615.8 364.6L619.6 364.1L623.4 364.1L627.1 364.9L630.5 366.2L632.6 367.4L684.1 401.8L687.0 397.6L689.9 392.7L685.3 388.7L683.0 386.3L680.9 383.8L679.0 381.2L677.3 378.4L675.8 375.6L674.6 372.7L673.5 369.7L672.7 366.7L672.1 363.6L671.8 360.5L671.6 357.3L671.7 354.2L672.1 351.0L672.6 347.9L673.4 344.8L674.5 341.8L676.8 336.6L679.8 331.7L683.4 327.2L687.6 322.9L692.3 319.2L697.4 315.9L703.3 313.0L702.0 307.7L700.8 303.0L639.5 325.5L637.1 326.2L634.6 326.7L632.1 326.8L629.5 326.7L627.1 326.3L624.7 325.6L622.4 324.7L620.3 323.5L617.5 321.2L615.3 318.6L613.8 315.6L613.0 312.3L612.9 309.0L613.6 305.8L614.9 302.6L617.0 299.8L619.6 297.4L622.7 295.4L625.0 294.4L686.2 271.9L682.8 266.9L680.0 263.2L673.6 264.9L670.0 265.5L666.4 265.8L662.8 266.0L659.2 266.0L652.9 265.5L649.4 264.9L645.9 264.1L640.0 262.3L636.7 261.0L633.6 259.5L628.4 256.4L623.6 252.9L621.1 250.6L618.8 248.3L615.2 243.8L613.4 241.1L611.9 238.3L610.5 235.4L609.4 232.4L608.0 227.1L607.5 224.0L607.2 220.8L607.3 215.1L602.0 213.6L596.1 212.1L586.8 269.1L585.9 272.3L584.9 274.4L582.8 277.2L580.2 279.6L577.1 281.6L574.8 282.6L572.4 283.3L568.6 283.9L566.1 283.9L563.6 283.7L559.9 282.7L557.7 281.8L555.6 280.6L553.7 279.1L552.0 277.5L550.0 274.7L549.1 272.6L548.5 270.5L548.1 267.2L548.3 265.0Z" fill="#0773a6" />
<defs><linearGradient id="ghubside" gradientUnits="userSpaceOnUse" x1="505" y1="0" x2="606" y2="0"><stop offset="0" stop-color="#0b3d5a"/><stop offset=".5" stop-color="#062b40"/><stop offset="1" stop-color="#0b3a55"/></linearGradient><linearGradient id="gbore" gradientUnits="userSpaceOnUse" x1="520" y1="350" x2="590" y2="300"><stop offset="0" stop-color="#0b324c"/><stop offset=".6" stop-color="#15486c"/><stop offset="1" stop-color="#34648e"/></linearGradient></defs><path d="M563.9 289.6L568.7 290.3L573.4 291.4L578.0 292.8L582.4 294.5L586.6 296.6L590.6 299.0L594.3 301.7L597.7 304.7L600.8 307.9L603.6 311.4L606.0 315.0L608.0 318.9L609.6 322.9L610.8 327.0L611.6 331.1L612.0 335.4L612.0 339.6L611.5 343.9L610.6 348.0L609.3 352.2L607.6 356.2L605.5 360.0L603.0 363.7L600.1 367.3L596.9 370.5L593.5 373.6L589.7 376.3L585.6 378.8L581.4 381.0L576.9 382.8L572.3 384.3L567.6 385.5L562.8 386.2L557.9 386.7L553.0 386.7L548.1 386.4L543.3 385.7L538.6 384.6L534.0 383.2L529.6 381.5L525.4 379.4L521.4 377.0L517.7 374.3L514.3 371.3L511.2 368.1L508.4 364.6L506.0 361.0L504.0 357.1L502.4 353.1L501.2 349.0L500.4 344.9L500.0 340.6L500.0 336.4L500.5 332.1L501.4 328.0L502.7 323.8L504.4 319.8L506.5 316.0L509.0 312.3L511.9 308.7L515.1 305.5L518.5 302.4L522.3 299.7L526.4 297.2L530.6 295.0L535.1 293.2L539.7 291.7L544.4 290.5L549.2 289.8L554.1 289.3L559.0 289.3Z" fill="none" stroke="#0a3f5e" stroke-width="0.8" />
<path d="M563.6 291.6L568.2 292.2L572.7 293.2L577.1 294.6L581.3 296.3L585.4 298.3L589.2 300.6L592.8 303.2L596.0 306.0L599.0 309.1L601.7 312.5L604.0 316.0L605.9 319.6L607.5 323.5L608.7 327.4L609.4 331.4L609.8 335.5L609.7 339.5L609.3 343.6L608.4 347.6L607.2 351.6L605.5 355.4L603.5 359.2L601.1 362.7L598.4 366.1L595.3 369.2L592.0 372.2L588.3 374.8L584.5 377.2L580.4 379.3L576.1 381.0L571.7 382.5L567.1 383.6L562.5 384.3L557.8 384.7L553.1 384.8L548.4 384.4L543.8 383.8L539.3 382.8L534.9 381.4L530.7 379.7L526.6 377.7L522.8 375.4L519.2 372.8L516.0 370.0L513.0 366.9L510.3 363.5L508.0 360.0L506.1 356.4L504.5 352.5L503.3 348.6L502.6 344.6L502.2 340.5L502.3 336.5L502.7 332.4L503.6 328.4L504.8 324.4L506.5 320.6L508.5 316.8L510.9 313.3L513.6 309.9L516.7 306.8L520.0 303.8L523.7 301.2L527.5 298.8L531.6 296.7L535.9 295.0L540.3 293.5L544.9 292.4L549.5 291.7L554.2 291.3L558.9 291.2Z" fill="none" stroke="#0b4f78" stroke-width="0.6" />
<path d="M510.5 306.4L509.8 307.7L509.1 309.0L508.5 310.3L508.0 311.6L507.5 313.0L507.0 314.3L506.6 315.7L506.2 317.1L505.9 318.5L505.7 319.9L505.5 321.2L505.3 322.6L505.2 324.0L505.2 325.5L505.2 326.9L505.3 328.3L505.4 329.7L506.5 339.9L506.7 341.2L506.9 342.6L507.2 344.0L507.5 345.4L507.9 346.7L508.3 348.1L508.8 349.4L509.3 350.7L509.9 352.0L510.5 353.3L511.2 354.6L511.9 355.8L512.7 357.0L513.5 358.2L514.4 359.4L515.3 360.5L516.2 361.7L517.2 362.8L518.3 363.8L519.3 364.8L520.5 365.8L521.6 366.8L522.8 367.7L524.0 368.6L525.3 369.5L526.5 370.3L527.9 371.1L529.2 371.9L530.6 372.6L532.0 373.2L533.4 373.9L534.9 374.4L536.3 375.0L537.8 375.5L539.4 375.9L540.9 376.4L542.4 376.7L544.0 377.1L545.6 377.3L547.2 377.6L548.8 377.8L550.4 377.9L552.0 378.0L553.6 378.1L555.2 378.1L556.8 378.0L558.4 378.0L560.0 377.8L561.6 377.7L563.2 377.4L564.8 377.2L566.4 376.9L568.0 376.5L569.5 376.1L571.1 375.7L572.6 375.2L574.1 374.6L575.6 374.1L577.1 373.5L578.5 372.8L579.9 372.1L581.3 371.4L582.7 370.6L584.0 369.8L585.3 368.9L586.6 368.1L587.8 367.1L589.0 366.2L590.2 365.2L591.3 364.2L592.4 363.1L593.5 362.1L594.5 360.9L595.5 359.8L596.4 358.6L597.3 357.5L598.2 356.2L599.0 355.0L599.7 353.8L600.4 352.5L601.1 351.2L601.7 349.9L602.2 348.6L602.7 347.2L603.2 345.9L603.6 344.5L604.0 343.1L604.3 341.7L604.5 340.3L604.7 339.0L604.9 337.6L605.0 336.2L605.0 334.7L605.0 333.3L604.9 331.9L604.8 330.5L603.7 320.3L603.5 319.0L603.3 317.6L603.0 316.2L602.7 314.8L602.3 313.5L601.9 312.1L601.4 310.8L600.9 309.5L600.3 308.2L599.7 306.9L599.0 305.6L598.3 304.4L597.5 303.2L596.7 302.0L595.8 300.8L594.9 299.7L594.0 298.5L593.0 297.4L591.9 296.4L590.9 295.4L589.8 294.4L588.6 293.4L587.4 292.5L586.2 291.6L585.0 290.7L583.7 289.9L582.3 289.1L581.0 288.3L579.6 287.6L578.2 287.0L576.8 286.3L575.3 285.8L573.9 285.2L572.4 284.7L570.9 284.3L569.3 283.8L567.8 283.5L566.2 283.1L564.6 282.9L563.1 282.6L561.5 282.4L559.9 282.3L558.3 282.2L556.6 282.1L555.0 282.1L553.4 282.2L551.8 282.2L550.2 282.4L548.6 282.5L547.0 282.8L545.4 283.0L543.8 283.3L542.2 283.7L540.7 284.1L539.1 284.5L537.6 285.0L536.1 285.6L534.6 286.1L533.2 286.7L531.7 287.4L530.3 288.1L528.9 288.8L527.5 289.6L526.2 290.4L524.9 291.3L523.6 292.1L522.4 293.1L521.2 294.0L520.0 295.0L518.9 296.0L517.8 297.1L516.7 298.1L515.7 299.3L514.7 300.4L513.8 301.6L512.9 302.7L512.1 304.0L511.3 305.2ZM506.4 338.0L506.4 338.0L506.9 342.6ZM603.9 323.7L603.9 323.7L603.0 316.2ZM538.2 365.7L536.7 365.3L535.2 364.8L533.7 364.2L532.3 363.7L530.8 363.0L529.4 362.4L528.1 361.7L526.7 360.9L525.4 360.1L524.1 359.3L522.9 358.4L521.6 357.5L520.4 356.6L519.3 355.6L518.2 354.6L517.1 353.6L516.1 352.6L515.1 351.5L514.1 350.3L513.2 349.2L512.4 348.0L511.6 346.8L510.8 345.6L510.1 344.4L509.4 343.1L508.8 341.8L508.2 340.5L507.7 339.2L507.2 337.9L506.8 336.5L506.4 335.2L506.4 335.1L506.4 334.2L506.5 332.8L506.6 331.4L506.8 330.1L507.1 328.7L507.4 327.3L507.8 325.9L508.2 324.5L508.6 323.2L509.1 321.8L509.7 320.5L510.3 319.2L511.0 317.9L511.7 316.6L512.4 315.4L513.2 314.2L514.1 312.9L514.9 311.8L515.9 310.6L516.9 309.5L517.9 308.3L518.9 307.3L520.0 306.2L521.2 305.2L522.3 304.2L523.5 303.3L524.8 302.3L526.0 301.5L527.4 300.6L528.7 299.8L530.1 299.0L531.4 298.3L532.9 297.6L534.3 296.9L535.8 296.3L537.3 295.8L538.8 295.2L540.3 294.7L541.8 294.3L543.4 293.9L545.0 293.5L546.5 293.2L548.1 293.0L549.7 292.7L551.3 292.6L553.0 292.4L554.6 292.4L556.2 292.3L557.8 292.3L559.4 292.4L561.0 292.5L562.6 292.6L564.2 292.8L565.8 293.1L567.4 293.3L568.9 293.7L570.5 294.0L572.0 294.5L573.5 294.9L575.0 295.4L576.5 296.0L577.9 296.5L579.4 297.2L580.8 297.8L582.2 298.5L583.5 299.3L584.8 300.1L586.1 300.9L587.4 301.8L588.6 302.7L589.8 303.6L590.9 304.6L592.0 305.6L593.1 306.6L594.1 307.6L595.1 308.7L596.1 309.9L597.0 311.0L597.8 312.2L598.6 313.4L599.4 314.6L600.1 315.8L600.8 317.1L601.4 318.4L602.0 319.7L602.6 321.0L603.0 322.3L603.5 323.7L603.8 325.0L603.8 325.1L603.8 326.0L603.7 327.4L603.6 328.8L603.4 330.1L603.1 331.5L602.8 332.9L602.5 334.3L602.0 335.7L601.6 337.0L601.1 338.4L600.5 339.7L599.9 341.0L599.3 342.3L598.6 343.6L597.8 344.8L597.0 346.0L596.2 347.3L595.3 348.4L594.3 349.6L593.4 350.7L592.3 351.9L591.3 352.9L590.2 354.0L589.1 355.0L587.9 356.0L586.7 356.9L585.4 357.9L584.2 358.7L582.9 359.6L581.5 360.4L580.2 361.2L578.8 361.9L577.3 362.6L575.9 363.3L574.4 363.9L572.9 364.4L571.4 365.0L569.9 365.5L568.4 365.9L566.8 366.3L565.2 366.7L563.7 367.0L562.1 367.2L560.5 367.5L558.9 367.6L557.3 367.8L555.6 367.8L554.0 367.9L552.4 367.9L550.8 367.8L549.2 367.7L547.6 367.6L546.0 367.4L544.4 367.1L542.8 366.9L541.3 366.5L539.7 366.2Z" fill="url(#ghubside)" />
<path d="M562.6 292.6L566.8 293.2L571.0 294.2L575.0 295.4L578.9 297.0L582.6 298.8L586.1 300.9L589.4 303.3L592.4 305.9L595.1 308.7L597.6 311.8L599.7 315.0L601.4 318.4L602.9 321.9L603.9 325.5L604.7 329.2L605.0 332.9L604.9 336.6L604.5 340.3L603.7 344.0L602.6 347.7L601.1 351.2L599.2 354.6L597.0 357.9L594.5 360.9L591.7 363.8L588.6 366.5L585.3 368.9L581.8 371.1L578.0 373.0L574.1 374.6L570.0 376.0L565.9 377.0L561.6 377.7L557.3 378.0L553.0 378.1L548.8 377.8L544.5 377.2L540.4 376.2L536.3 375.0L532.5 373.4L528.8 371.6L525.3 369.5L522.0 367.1L519.0 364.5L516.2 361.7L513.8 358.6L511.7 355.4L509.9 352.0L508.5 348.5L507.4 344.9L506.7 341.2L506.4 337.5L506.4 333.8L506.8 330.1L507.6 326.4L508.8 322.7L510.3 319.2L512.2 315.8L514.3 312.5L516.9 309.5L519.7 306.6L522.7 303.9L526.0 301.5L529.6 299.3L533.3 297.4L537.3 295.8L541.3 294.4L545.5 293.4L549.7 292.7L554.0 292.4L558.3 292.3Z" fill="url(#ghubside)" />
<path d="M561.5 282.4L565.7 283.0L569.8 284.0L573.9 285.2L577.7 286.8L581.5 288.6L585.0 290.7L588.2 293.1L591.2 295.7L594.0 298.5L596.4 301.6L598.5 304.8L600.3 308.2L601.7 311.7L602.8 315.3L603.5 319.0L603.8 322.7L603.8 326.4L603.4 330.1L602.6 333.8L601.4 337.5L599.9 341.0L598.1 344.4L595.9 347.7L593.4 350.7L590.6 353.6L587.5 356.3L584.2 358.7L580.6 360.9L576.9 362.8L572.9 364.4L568.9 365.8L564.7 366.8L560.5 367.5L556.2 367.8L551.9 367.9L547.6 367.6L543.4 367.0L539.2 366.0L535.2 364.8L531.3 363.2L527.6 361.4L524.1 359.3L520.8 356.9L517.8 354.3L515.1 351.5L512.7 348.4L510.5 345.2L508.8 341.8L507.3 338.3L506.3 334.7L505.6 331.0L505.2 327.3L505.3 323.6L505.7 319.9L506.5 316.2L507.6 312.5L509.1 309.0L511.0 305.6L513.2 302.3L515.7 299.3L518.5 296.4L521.6 293.7L524.9 291.3L528.4 289.1L532.2 287.2L536.1 285.6L540.2 284.2L544.3 283.2L548.6 282.5L552.9 282.2L557.2 282.1Z" fill="#0a70a2" stroke="#0a3f5e" stroke-width="0.7" />
<path d="M560.9 285.7L564.8 286.2L568.7 287.1L572.4 288.2L576.0 289.7L579.4 291.4L582.6 293.3L585.7 295.5L588.5 297.9L591.0 300.5L593.2 303.4L595.2 306.3L596.8 309.4L598.1 312.7L599.1 316.0L599.8 319.4L600.1 322.9L600.1 326.3L599.7 329.8L598.9 333.2L597.9 336.5L596.5 339.8L594.8 342.9L592.7 345.9L590.4 348.8L587.8 351.5L585.0 353.9L581.9 356.2L578.6 358.2L575.2 360.0L571.6 361.5L567.8 362.7L564.0 363.6L560.0 364.2L556.1 364.6L552.1 364.6L548.1 364.3L544.2 363.8L540.4 362.9L536.7 361.8L533.1 360.3L529.6 358.6L526.4 356.7L523.4 354.5L520.6 352.1L518.1 349.5L515.8 346.6L513.9 343.7L512.2 340.6L510.9 337.3L509.9 334.0L509.3 330.6L509.0 327.1L509.0 323.7L509.4 320.2L510.1 316.8L511.2 313.5L512.6 310.2L514.3 307.1L516.3 304.1L518.6 301.2L521.2 298.5L524.1 296.1L527.1 293.8L530.4 291.8L533.9 290.0L537.5 288.5L541.3 287.3L545.1 286.4L549.0 285.8L553.0 285.4L557.0 285.4Z" fill="none" stroke="#0b5a87" stroke-width="0.5" />
<path d="M559.5 294.6L562.5 295.0L565.5 295.7L568.4 296.5L571.1 297.7L573.8 299.0L576.3 300.5L578.6 302.2L580.8 304.0L582.7 306.1L584.5 308.3L586.0 310.6L587.3 313.0L588.3 315.5L589.0 318.0L589.6 320.7L589.8 323.3L589.8 326.0L589.5 328.7L588.9 331.3L588.1 333.9L587.0 336.4L585.7 338.9L584.1 341.2L582.3 343.4L580.3 345.5L578.1 347.4L575.7 349.1L573.2 350.7L570.5 352.0L567.7 353.2L564.8 354.1L561.8 354.9L558.8 355.4L555.7 355.6L552.6 355.6L549.6 355.4L546.5 355.0L543.6 354.3L540.7 353.5L537.9 352.3L535.3 351.0L532.8 349.5L530.4 347.8L528.3 346.0L526.3 343.9L524.6 341.7L523.1 339.4L521.8 337.0L520.8 334.5L520.0 332.0L519.5 329.3L519.3 326.7L519.3 324.0L519.6 321.3L520.2 318.7L521.0 316.1L522.1 313.6L523.4 311.1L525.0 308.8L526.8 306.6L528.8 304.5L531.0 302.6L533.3 300.9L535.9 299.3L538.6 298.0L541.4 296.8L544.3 295.9L547.2 295.1L550.3 294.6L553.3 294.4L556.4 294.4Z" fill="url(#gbore)" stroke="#0a2f48" stroke-width="0.8" />
<defs><linearGradient id="grside" gradientUnits="userSpaceOnUse" x1="570" y1="0" x2="676" y2="0"><stop offset="0" stop-color="#3a4241"/><stop offset=".55" stop-color="#39403f"/><stop offset=".8" stop-color="#4d5654"/><stop offset="1" stop-color="#5b6462"/></linearGradient></defs>
<path d="M583.8 436.7L579.1 440.5L575.6 444.2L572.4 448.1L569.5 452.6L570.9 464.6L576.7 467.4L581.6 470.2L586.4 473.3L590.9 476.6L595.9 480.8L599.9 484.6L603.7 488.6L607.1 492.8L610.8 497.9L613.6 502.4L616.1 507.1L618.2 511.9L620.3 517.7L621.8 522.7L622.9 527.8L623.7 533.4L628.3 532.9L633.7 532.0L638.9 530.5L644.0 528.7L648.8 526.4L653.4 523.7L657.6 520.7L661.5 517.3L664.5 514.2L667.6 510.3L670.3 506.1L672.2 502.5L674.0 498.0L675.3 493.3L676.0 489.4L676.3 484.7L676.1 479.9L674.5 466.4L673.8 462.5L672.7 458.7L670.9 454.2L668.2 449.3L665.4 445.3L662.1 441.5L658.4 438.1L654.3 435.0L649.9 432.3L645.2 430.0L640.3 428.1L635.1 426.6L629.8 425.5L624.4 425.0L619.0 424.9L613.5 425.2L608.1 426.1L602.9 427.3L597.7 429.0L592.8 431.2L588.2 433.7ZM622.3 521.4L622.2 520.1L621.9 518.4L621.5 515.8L620.4 510.7L617.5 501.5L613.5 492.7L610.9 488.1L607.9 483.7L604.7 479.3L601.1 475.2L593.9 468.2L585.8 461.8L576.8 456.3L580.5 452.5L585.1 448.7L590.3 445.3L595.8 442.4L601.6 440.1L607.7 438.4L614.0 437.3L620.3 436.9L625.8 437.0L630.3 437.4L634.7 438.2L639.1 439.3L643.3 440.6L647.4 442.3L651.3 444.3L655.0 446.5L658.4 449.0L662.3 452.4L665.1 455.4L667.7 458.6L670.0 462.0L671.9 465.5L673.5 469.2L674.9 473.5L674.5 478.2L673.6 482.9L672.4 486.7L670.5 491.2L668.1 495.5L665.3 499.6L662.5 502.8L658.9 506.4L654.9 509.7L651.3 512.2L646.7 514.8L641.8 517.0L635.8 519.1L630.5 520.3L623.3 521.3ZM622.3 521.1L622.3 521.1L622.2 520.1Z" fill="url(#grside)" />
<path d="M627.6 437.1L626.7 437.0L625.8 437.0L624.9 436.9L624.0 436.9L623.1 436.9L622.2 436.9L621.3 436.9L620.3 436.9L619.4 436.9L618.5 436.9L617.6 437.0L616.7 437.1L615.8 437.1L614.9 437.2L614.0 437.3L613.1 437.5L612.2 437.6L611.3 437.7L610.4 437.9L609.5 438.1L608.6 438.2L607.7 438.4L606.8 438.6L606.0 438.9L605.1 439.1L604.2 439.3L603.3 439.6L602.5 439.9L601.6 440.1L600.8 440.4L599.9 440.7L599.1 441.0L598.3 441.4L597.4 441.7L596.6 442.1L595.8 442.4L595.0 442.8L594.2 443.2L593.4 443.6L592.6 444.0L591.8 444.4L591.0 444.8L590.3 445.3L589.5 445.7L588.8 446.2L588.0 446.7L587.3 447.2L586.6 447.6L585.8 448.2L585.1 448.7L584.4 449.2L583.8 449.7L583.1 450.3L582.4 450.8L581.8 451.4L581.1 451.9L580.5 452.5L579.9 453.1L579.3 453.7L578.7 454.3L578.1 454.9L577.5 455.5L576.9 456.2L576.4 456.8L575.8 457.5L575.3 458.1L574.8 458.8L574.3 459.4L573.8 460.1L573.3 460.8L572.8 461.5L572.4 462.2L571.9 462.9L571.5 463.6L571.1 464.3L570.9 464.6L571.5 464.9L572.4 465.3L573.3 465.7L574.1 466.1L575.0 466.5L575.8 467.0L576.7 467.4L577.5 467.9L578.4 468.3L579.2 468.8L580.0 469.3L580.8 469.8L581.6 470.2L582.4 470.7L583.3 471.2L584.0 471.7L584.8 472.3L585.6 472.8L586.4 473.3L587.2 473.8L587.9 474.4L588.7 474.9L589.5 475.5L590.2 476.1L590.9 476.6L591.7 477.2L592.4 477.8L593.1 478.4L593.8 479.0L594.5 479.6L595.2 480.2L595.9 480.8L596.6 481.4L597.3 482.0L598.0 482.7L598.6 483.3L599.3 483.9L599.9 484.6L600.6 485.2L601.2 485.9L601.8 486.6L602.5 487.2L603.1 487.9L603.7 488.6L604.3 489.3L604.9 489.9L605.4 490.6L606.0 491.3L606.6 492.1L607.1 492.8L607.7 493.5L608.2 494.2L608.7 494.9L609.3 495.7L609.8 496.4L610.3 497.1L610.8 497.9L611.3 498.6L611.8 499.4L612.2 500.1L612.7 500.9L613.1 501.6L613.6 502.4L614.0 503.2L614.5 504.0L614.9 504.7L615.3 505.5L615.7 506.3L616.1 507.1L616.5 507.9L616.8 508.7L617.2 509.5L617.6 510.3L617.9 511.1L618.2 511.9L618.6 512.7L618.9 513.5L619.2 514.4L619.5 515.2L619.8 516.0L620.1 516.8L620.3 517.7L620.6 518.5L620.9 519.3L621.1 520.2L621.3 521.0L621.6 521.8L621.8 522.7L622.0 523.5L622.2 524.4L622.4 525.2L622.5 526.1L622.7 526.9L622.9 527.8L623.0 528.6L623.2 529.5L623.3 530.4L623.4 531.2L623.5 532.1L623.6 532.9L623.7 533.4L623.8 533.4L624.7 533.3L625.6 533.2L626.5 533.2L627.4 533.0L628.3 532.9L629.2 532.8L630.1 532.7L631.0 532.5L631.9 532.3L632.8 532.1L633.7 532.0L634.5 531.7L635.4 531.5L636.3 531.3L637.2 531.1L638.0 530.8L638.9 530.5L639.8 530.2L640.6 530.0L641.5 529.7L642.3 529.3L643.1 529.0L644.0 528.7L644.8 528.3L645.6 528.0L646.4 527.6L647.2 527.2L648.0 526.8L648.8 526.4L649.6 526.0L650.4 525.5L651.1 525.1L651.9 524.6L652.6 524.2L653.4 523.7L654.1 523.2L654.8 522.7L655.5 522.2L656.2 521.7L656.9 521.2L657.6 520.7L658.3 520.1L659.0 519.6L659.6 519.0L660.3 518.4L660.9 517.9L661.5 517.3L662.1 516.7L662.7 516.1L663.3 515.5L663.9 514.8L664.5 514.2L665.0 513.6L665.6 512.9L666.1 512.3L666.6 511.6L667.1 511.0L667.6 510.3L668.1 509.6L668.6 508.9L669.0 508.2L669.5 507.5L669.9 506.8L670.3 506.1L670.7 505.4L671.1 504.7L671.5 503.9L671.9 503.2L672.2 502.5L672.5 501.7L672.9 501.0L673.2 500.2L673.5 499.5L673.7 498.7L674.0 498.0L674.3 497.2L674.5 496.4L674.7 495.7L674.9 494.9L675.1 494.1L675.3 493.3L675.5 492.6L675.6 491.8L675.7 491.0L675.9 490.2L676.0 489.4L676.1 488.6L676.1 487.8L676.2 487.1L676.2 486.3L676.3 485.5L676.3 484.7L676.3 483.9L676.3 483.1L676.3 482.3L676.2 481.5L676.2 480.7L676.1 479.9L676.0 479.2L675.9 478.4L675.8 477.6L675.6 476.8L675.5 476.0L675.3 475.3L675.2 474.5L675.0 473.7L674.8 473.0L674.5 472.2L674.3 471.4L674.1 470.7L673.8 469.9L673.5 469.2L673.2 468.4L672.9 467.7L672.6 467.0L672.3 466.2L671.9 465.5L671.6 464.8L671.2 464.1L670.8 463.4L670.4 462.7L670.0 462.0L669.6 461.3L669.1 460.6L668.7 459.9L668.2 459.2L667.7 458.6L667.2 457.9L666.7 457.3L666.2 456.6L665.7 456.0L665.1 455.4L664.6 454.7L664.0 454.1L663.5 453.5L662.9 452.9L662.3 452.4L661.7 451.8L661.0 451.2L660.4 450.7L659.8 450.1L659.1 449.6L658.4 449.0L657.8 448.5L657.1 448.0L656.4 447.5L655.7 447.0L655.0 446.5L654.3 446.1L653.5 445.6L652.8 445.2L652.0 444.7L651.3 444.3L650.5 443.9L649.8 443.5L649.0 443.1L648.2 442.7L647.4 442.3L646.6 442.0L645.8 441.6L645.0 441.3L644.1 441.0L643.3 440.6L642.5 440.3L641.6 440.1L640.8 439.8L640.0 439.5L639.1 439.3L638.2 439.0L637.4 438.8L636.5 438.6L635.6 438.4L634.7 438.2L633.9 438.0L633.0 437.8L632.1 437.7L631.2 437.5L630.3 437.4L629.4 437.3L628.5 437.2Z" fill="url(#grside)" />
<path d="M626.2 425.1L625.3 425.0L624.4 425.0L623.5 424.9L622.6 424.9L621.7 424.9L620.8 424.9L619.9 424.9L619.0 424.9L618.1 424.9L617.2 424.9L616.3 425.0L615.3 425.1L614.4 425.1L613.5 425.2L612.6 425.3L611.7 425.5L610.8 425.6L609.9 425.7L609.0 425.9L608.1 426.1L607.3 426.2L606.4 426.4L605.5 426.6L604.6 426.9L603.7 427.1L602.9 427.3L602.0 427.6L601.1 427.9L600.3 428.1L599.4 428.4L598.6 428.7L597.7 429.0L596.9 429.4L596.1 429.7L595.2 430.1L594.4 430.4L593.6 430.8L592.8 431.2L592.0 431.6L591.2 432.0L590.4 432.4L589.7 432.8L588.9 433.3L588.2 433.7L587.4 434.2L586.7 434.7L585.9 435.2L585.2 435.6L584.5 436.2L583.8 436.7L583.1 437.2L582.4 437.7L581.7 438.3L581.1 438.8L580.4 439.4L579.8 439.9L579.1 440.5L578.5 441.1L577.9 441.7L577.3 442.3L576.7 442.9L576.1 443.5L575.6 444.2L575.0 444.8L574.5 445.5L573.9 446.1L573.4 446.8L572.9 447.4L572.4 448.1L571.9 448.8L571.5 449.5L571.0 450.2L570.6 450.9L570.1 451.6L569.7 452.3L569.5 452.6L570.2 452.9L571.0 453.3L571.9 453.7L572.8 454.1L573.6 454.5L574.5 455.0L575.3 455.4L576.2 455.9L577.0 456.3L577.8 456.8L578.7 457.3L579.5 457.8L580.3 458.2L581.1 458.7L581.9 459.2L582.7 459.7L583.5 460.3L584.3 460.8L585.0 461.3L585.8 461.8L586.6 462.4L587.3 462.9L588.1 463.5L588.8 464.1L589.6 464.6L590.3 465.2L591.0 465.8L591.8 466.4L592.5 467.0L593.2 467.6L593.9 468.2L594.6 468.8L595.3 469.4L595.9 470.0L596.6 470.7L597.3 471.3L597.9 471.9L598.6 472.6L599.2 473.2L599.9 473.9L600.5 474.6L601.1 475.2L601.7 475.9L602.3 476.6L602.9 477.3L603.5 477.9L604.1 478.6L604.7 479.3L605.2 480.1L605.8 480.8L606.3 481.5L606.9 482.2L607.4 482.9L607.9 483.7L608.4 484.4L608.9 485.1L609.4 485.9L609.9 486.6L610.4 487.4L610.9 488.1L611.3 488.9L611.8 489.6L612.2 490.4L612.7 491.2L613.1 492.0L613.5 492.7L613.9 493.5L614.3 494.3L614.7 495.1L615.1 495.9L615.5 496.7L615.8 497.5L616.2 498.3L616.5 499.1L616.9 499.9L617.2 500.7L617.5 501.5L617.8 502.4L618.1 503.2L618.4 504.0L618.7 504.8L619.0 505.7L619.2 506.5L619.5 507.3L619.7 508.2L620.0 509.0L620.2 509.8L620.4 510.7L620.6 511.5L620.8 512.4L621.0 513.2L621.2 514.1L621.4 514.9L621.5 515.8L621.7 516.6L621.8 517.5L621.9 518.4L622.0 519.2L622.2 520.1L622.3 520.9L622.3 521.4L622.4 521.4L623.3 521.3L624.2 521.2L625.1 521.2L626.0 521.0L626.9 520.9L627.8 520.8L628.7 520.7L629.6 520.5L630.5 520.3L631.4 520.1L632.3 520.0L633.2 519.7L634.1 519.5L634.9 519.3L635.8 519.1L636.7 518.8L637.5 518.5L638.4 518.2L639.3 518.0L640.1 517.7L640.9 517.3L641.8 517.0L642.6 516.7L643.4 516.3L644.2 516.0L645.1 515.6L645.9 515.2L646.7 514.8L647.4 514.4L648.2 514.0L649.0 513.5L649.8 513.1L650.5 512.6L651.3 512.2L652.0 511.7L652.7 511.2L653.5 510.7L654.2 510.2L654.9 509.7L655.6 509.2L656.3 508.7L656.9 508.1L657.6 507.6L658.3 507.0L658.9 506.4L659.5 505.9L660.2 505.3L660.8 504.7L661.4 504.1L662.0 503.5L662.5 502.8L663.1 502.2L663.7 501.6L664.2 500.9L664.7 500.3L665.3 499.6L665.8 499.0L666.3 498.3L666.7 497.6L667.2 496.9L667.7 496.2L668.1 495.5L668.5 494.8L669.0 494.1L669.4 493.4L669.8 492.7L670.1 491.9L670.5 491.2L670.8 490.5L671.2 489.7L671.5 489.0L671.8 488.2L672.1 487.5L672.4 486.7L672.6 486.0L672.9 485.2L673.1 484.4L673.4 483.7L673.6 482.9L673.8 482.1L673.9 481.3L674.1 480.6L674.3 479.8L674.4 479.0L674.5 478.2L674.6 477.4L674.7 476.6L674.8 475.8L674.8 475.1L674.9 474.3L674.9 473.5L674.9 472.7L674.9 471.9L674.9 471.1L674.9 470.3L674.9 469.5L674.8 468.7L674.7 467.9L674.6 467.2L674.5 466.4L674.4 465.6L674.3 464.8L674.1 464.0L674.0 463.3L673.8 462.5L673.6 461.7L673.4 461.0L673.2 460.2L673.0 459.4L672.7 458.7L672.4 457.9L672.2 457.2L671.9 456.4L671.6 455.7L671.3 455.0L670.9 454.2L670.6 453.5L670.2 452.8L669.8 452.1L669.5 451.4L669.1 450.7L668.6 450.0L668.2 449.3L667.8 448.6L667.3 447.9L666.9 447.2L666.4 446.6L665.9 445.9L665.4 445.3L664.9 444.6L664.3 444.0L663.8 443.4L663.2 442.7L662.7 442.1L662.1 441.5L661.5 440.9L660.9 440.4L660.3 439.8L659.7 439.2L659.0 438.7L658.4 438.1L657.8 437.6L657.1 437.0L656.4 436.5L655.7 436.0L655.0 435.5L654.3 435.0L653.6 434.5L652.9 434.1L652.2 433.6L651.4 433.2L650.7 432.7L649.9 432.3L649.2 431.9L648.4 431.5L647.6 431.1L646.8 430.7L646.0 430.3L645.2 430.0L644.4 429.6L643.6 429.3L642.8 429.0L642.0 428.6L641.1 428.3L640.3 428.1L639.4 427.8L638.6 427.5L637.7 427.3L636.9 427.0L636.0 426.8L635.1 426.6L634.3 426.4L633.4 426.2L632.5 426.0L631.6 425.8L630.7 425.7L629.8 425.5L628.9 425.4L628.0 425.3L627.1 425.2Z" fill="#929c9b" stroke="#5d6665" stroke-width=".5"/>
<ellipse cx="543" cy="533" rx="9" ry="6" fill="#566060" opacity=".8"/>
<path d="M536.8 515 L537.2 521 A12.3 8.5 0 0 0 561.4 519 L561 513 Z" fill="#a9ada9" stroke="#666d6a" stroke-width=".5"/>
<ellipse cx="548.9" cy="514" rx="12.2" ry="9.8" fill="#c3c5c0" stroke="#7b817d" stroke-width=".5"/>
<path d="M551 503.6 A10 9.3 0 1 1 541.6 521.6" fill="none" stroke="#d63c2a" stroke-width="2.6" stroke-linecap="round"/>
<path d="M540.3 509 Q538.8 515 541 520.5" fill="none" stroke="#d63c2a" stroke-width="1.2"/>
<circle cx="543.6" cy="521" r="2.2" fill="#d8d8d4" stroke="#d63c2a" stroke-width="1"/>
<ellipse cx="548.4" cy="512.4" rx="6.6" ry="6" fill="#c9cbc8" stroke="#8d928f" stroke-width=".5"/></g>
<path d="M366.5 331.8L367.0 338.2L367.9 344.6L369.0 350.9L370.4 357.2L372.1 363.4L374.1 369.6L376.4 375.6L378.9 381.6L381.7 387.5L384.8 393.3L388.1 399.0L391.7 404.5L395.5 409.9L487.7 529.4L490.9 533.7L494.4 537.7L498.0 541.7L501.8 545.6L505.8 549.3L510.0 552.8L514.3 556.2L518.7 559.5L523.4 562.6L528.1 565.5L533.0 568.3L538.0 570.9L543.2 573.3L548.4 575.6L553.7 577.6L559.2 579.5L564.7 581.2L570.3 582.7L576.0 584.0L581.7 585.1L587.5 586.0L593.3 586.8L599.1 587.3L605.0 587.6L610.9 587.7L616.8 587.6L622.7 587.3L628.6 586.8L634.4 586.1L640.2 585.3L646.0 584.2L651.7 582.9L657.4 581.4L663.0 579.8L668.6 577.9L674.0 575.9L679.4 573.6L684.6 571.2L689.8 568.7L694.8 565.9L699.7 563.0L704.5 559.9L709.2 556.7L713.7 553.3L718.0 549.7L722.2 546.0L726.2 542.2L730.0 538.3L733.7 534.2L737.2 530.0L740.5 525.7L743.6 521.3L746.5 516.8L749.2 512.2L751.7 507.5L753.9 502.7L756.0 497.9L757.8 493.0L759.4 488.0L760.8 483.0L762.0 478.0L763.0 472.9L763.7 467.8L764.2 462.7L764.4 457.6L764.4 452.5L764.2 447.3L763.8 442.2L763.1 437.2L740.9 294.2L739.8 287.9L738.4 281.6L736.7 275.4L734.7 269.2L732.4 263.2L729.9 257.2L727.1 251.3L724.0 245.5L720.7 239.8L717.1 234.3L713.3 228.9L709.2 223.6L704.9 218.4L700.3 213.5L695.5 208.7L690.5 204.0L685.3 199.6L679.9 195.3L674.3 191.2L668.5 187.3L662.6 183.6L656.4 180.1L650.1 176.9L643.7 173.8L637.1 171.0L630.4 168.4L623.6 166.1L616.7 163.9L609.7 162.1L602.6 160.4L595.4 159.0L588.1 157.9L580.8 157.0L573.5 156.3L566.1 155.9L558.8 155.8L551.4 155.9L544.0 156.3L536.6 156.9L529.3 157.8L522.0 158.9L514.7 160.2L507.5 161.8L500.4 163.7L493.4 165.8L486.4 168.1L479.6 170.7L472.9 173.4L466.3 176.5L459.8 179.7L453.5 183.1L447.3 186.8L441.3 190.7L435.5 194.7L429.9 199.0L424.4 203.4L419.2 208.0L414.2 212.8L409.3 217.8L404.7 222.9L400.4 228.2L396.3 233.6L392.4 239.1L388.7 244.8L385.4 250.5L382.2 256.4L379.4 262.4L376.8 268.5L374.5 274.6L372.5 280.8L370.7 287.1L369.2 293.4L368.1 299.8L367.2 306.2L366.6 312.6L366.3 319.0L366.2 325.4ZM393.5 319.7L393.7 314.2L394.2 308.7L395.0 303.2L396.0 297.7L397.3 292.3L398.8 286.9L400.5 281.6L402.5 276.3L404.7 271.1L407.2 266.0L409.9 260.9L412.8 256.0L415.9 251.1L419.2 246.4L422.8 241.7L426.5 237.2L430.4 232.8L434.6 228.6L438.9 224.4L443.4 220.5L448.1 216.7L452.9 213.0L457.9 209.5L463.1 206.2L468.4 203.1L473.8 200.1L479.3 197.3L485.0 194.7L490.8 192.3L496.6 190.1L502.6 188.1L508.6 186.4L514.7 184.8L520.9 183.4L527.2 182.2L533.4 181.3L539.7 180.5L546.1 180.0L552.4 179.7L558.7 179.6L565.1 179.7L571.4 180.0L577.7 180.6L584.0 181.4L590.2 182.4L596.3 183.5L602.4 185.0L608.5 186.6L614.4 188.4L620.3 190.4L626.0 192.6L631.7 195.1L637.2 197.7L642.6 200.5L647.9 203.5L653.0 206.6L657.9 210.0L662.8 213.5L667.4 217.1L671.9 221.0L676.2 225.0L680.3 229.1L684.2 233.4L687.9 237.8L691.4 242.3L694.7 247.0L697.8 251.7L700.6 256.6L703.3 261.6L705.7 266.6L707.9 271.8L709.8 277.0L711.5 282.3L713.0 287.6L714.2 293.0L715.1 298.4L735.5 441.0L736.0 445.2L736.4 449.3L736.6 453.5L736.6 457.7L736.4 461.9L736.0 466.1L735.4 470.3L734.6 474.4L733.6 478.5L732.5 482.6L731.2 486.7L729.7 490.7L728.0 494.6L726.1 498.5L724.1 502.4L721.9 506.1L719.5 509.8L717.0 513.4L714.3 516.9L711.5 520.4L708.5 523.7L705.3 526.9L702.0 530.1L698.6 533.1L695.1 536.0L691.4 538.7L687.6 541.4L683.7 543.9L679.7 546.3L675.5 548.5L671.3 550.7L667.0 552.6L662.7 554.4L658.2 556.1L653.7 557.6L649.1 559.0L644.4 560.2L639.7 561.2L635.0 562.1L630.3 562.9L625.5 563.4L620.7 563.8L615.8 564.1L611.0 564.1L606.2 564.0L601.4 563.8L596.6 563.4L591.9 562.8L587.1 562.0L582.5 561.1L577.8 560.0L573.2 558.8L568.7 557.4L564.3 555.9L559.9 554.2L555.6 552.4L551.4 550.4L547.3 548.3L543.3 546.0L539.5 543.6L535.7 541.1L532.0 538.4L528.5 535.6L525.1 532.7L521.8 529.7L518.7 526.5L515.8 523.3L512.9 519.9L510.3 516.5L418.6 397.8L415.3 393.1L412.2 388.4L409.4 383.5L406.7 378.5L404.3 373.5L402.1 368.3L400.2 363.1L398.5 357.8L397.0 352.5L395.8 347.1L394.9 341.7L394.1 336.2L393.7 330.7L393.4 325.2Z" fill="#ece8e0" fill-rule="evenodd"/>
<path d="M393.4 325.2L393.5 319.7L393.7 314.2L394.2 308.7L395.0 303.2L396.0 297.7L397.3 292.3L398.8 286.9L400.5 281.6L402.5 276.3L404.7 271.1L407.2 266.0L409.9 260.9L412.8 256.0L415.9 251.1L419.2 246.4L422.8 241.7L426.5 237.2L430.4 232.8L434.6 228.6L438.9 224.4L443.4 220.5L448.1 216.7L452.9 213.0L457.9 209.5L463.1 206.2L468.4 203.1L473.8 200.1L479.3 197.3L485.0 194.7L490.8 192.3L496.6 190.1L502.6 188.1L508.6 186.4L514.7 184.8L520.9 183.4L527.2 182.2L533.4 181.3L539.7 180.5L546.1 180.0L552.4 179.7L558.7 179.6L565.1 179.7L571.4 180.0L577.7 180.6L584.0 181.4L590.2 182.4L596.3 183.5L602.4 185.0L608.5 186.6L614.4 188.4L620.3 190.4L626.0 192.6L631.7 195.1L637.2 197.7L642.6 200.5L647.9 203.5L653.0 206.6L657.9 210.0L662.8 213.5L667.4 217.1L671.9 221.0L676.2 225.0L680.3 229.1L684.2 233.4L687.9 237.8L691.4 242.3L694.7 247.0L697.8 251.7L700.6 256.6L703.3 261.6L705.7 266.6L707.9 271.8L709.8 277.0L711.5 282.3L713.0 287.6L714.2 293.0L715.1 298.4L735.5 441.0L736.0 445.2L736.4 449.3L736.6 453.5L736.6 457.7L736.4 461.9L736.0 466.1L735.4 470.3L734.6 474.4L733.6 478.5L732.5 482.6L731.2 486.7L729.7 490.7L728.0 494.6L726.1 498.5L724.1 502.4L721.9 506.1L719.5 509.8L717.0 513.4L714.3 516.9L711.5 520.4L708.5 523.7L705.3 526.9L702.0 530.1L698.6 533.1L695.1 536.0L691.4 538.7L687.6 541.4L683.7 543.9L679.7 546.3L675.5 548.5L671.3 550.7L667.0 552.6L662.7 554.4L658.2 556.1L653.7 557.6L649.1 559.0L644.4 560.2L639.7 561.2L635.0 562.1L630.3 562.9L625.5 563.4L620.7 563.8L615.8 564.1L611.0 564.1L606.2 564.0L601.4 563.8L596.6 563.4L591.9 562.8L587.1 562.0L582.5 561.1L577.8 560.0L573.2 558.8L568.7 557.4L564.3 555.9L559.9 554.2L555.6 552.4L551.4 550.4L547.3 548.3L543.3 546.0L539.5 543.6L535.7 541.1L532.0 538.4L528.5 535.6L525.1 532.7L521.8 529.7L518.7 526.5L515.8 523.3L512.9 519.9L510.3 516.5L418.6 397.8L415.3 393.1L412.2 388.4L409.4 383.5L406.7 378.5L404.3 373.5L402.1 368.3L400.2 363.1L398.5 357.8L397.0 352.5L395.8 347.1L394.9 341.7L394.1 336.2L393.7 330.7Z" fill="none" stroke="#8c908a" stroke-width=".6"/>
<ellipse cx="487.5" cy="177.0" rx="4.1" ry="3.6" fill="#3a4342"/>
<ellipse cx="618.0" cy="172.5" rx="4.1" ry="3.6" fill="#3a4342"/>
<ellipse cx="392.5" cy="258.0" rx="4.1" ry="3.6" fill="#3a4342"/>
<ellipse cx="713.8" cy="247.0" rx="4.1" ry="3.6" fill="#3a4342"/>
<ellipse cx="384.0" cy="372.5" rx="4.1" ry="3.6" fill="#3a4342"/>
<ellipse cx="738.8" cy="360.8" rx="4.1" ry="3.6" fill="#3a4342"/>
<ellipse cx="455.5" cy="469.0" rx="4.1" ry="3.6" fill="#3a4342"/>
<ellipse cx="748.0" cy="477.0" rx="4.1" ry="3.6" fill="#3a4342"/>
<ellipse cx="540.0" cy="556.0" rx="4.1" ry="3.6" fill="#3a4342"/>
<ellipse cx="667.0" cy="565.5" rx="4.1" ry="3.6" fill="#3a4342"/>
<defs><linearGradient id="gsh1" gradientUnits="userSpaceOnUse" x1="523" y1="0" x2="575" y2="0"><stop offset="0" stop-color="#b0b6b0"/><stop offset=".22" stop-color="#c5c9c1"/><stop offset=".48" stop-color="#babcb1"/><stop offset=".58" stop-color="#b3b3a5"/><stop offset="1" stop-color="#a8a99b"/></linearGradient><linearGradient id="gsh2" gradientUnits="userSpaceOnUse" x1="523" y1="0" x2="584" y2="0"><stop offset="0" stop-color="#969c97"/><stop offset=".3" stop-color="#b0b4ac"/><stop offset=".6" stop-color="#a9aba1"/><stop offset="1" stop-color="#8b9089"/></linearGradient><linearGradient id="gsh3" gradientUnits="userSpaceOnUse" x1="523" y1="0" x2="584" y2="0"><stop offset="0" stop-color="#767d79"/><stop offset=".35" stop-color="#959a94"/><stop offset=".7" stop-color="#888d87"/><stop offset="1" stop-color="#6d7470"/></linearGradient></defs>
<path d="M523.3 314 L527 338.5 A28.6 15.5 -3 0 0 583.7 333 L581.7 310 Z" fill="url(#gsh3)" stroke="#4f5653" stroke-width=".6"/>
<path d="M524.3 301 L523.5 315 A29.2 13.8 -4 0 0 581.9 311 L579.8 297.4 A28 13 -4 0 1 524.3 301 Z" fill="url(#gsh2)" stroke="#5c625e" stroke-width=".6"/>
<ellipse cx="552" cy="299.2" rx="27.9" ry="12.6" transform="rotate(-4 552 299.2)" fill="#b9bcb4" stroke="#6d736f" stroke-width=".5"/>
<path d="M523.5 315 A29.2 13.8 -4 0 0 581.9 311" fill="none" stroke="#cfd1ca" stroke-width="1"/>
<path d="M564 239 L568 238 L571.5 245 L576.5 280 L572.5 283 L566 262 Z" fill="#a4a8a3" stroke="#6f7571" stroke-width=".5"/>
<path d="M565 239.5 L568 238 L571.5 245 L568.5 248 Z" fill="#cfd1cd"/>
<path d="M522.9 249 L527.2 302 A23.6 13.5 -4 0 0 574 299.5 L565.8 246 Z" fill="url(#gsh1)" stroke="#6a706c" stroke-width=".5"/>
<path d="M527.2 302 A23.6 13.5 -4 0 0 574 299.5" fill="none" stroke="#d8dad3" stroke-width="1.1"/>
<ellipse cx="544.4" cy="248.5" rx="21.7" ry="18.2" transform="rotate(-6 544.4 248.5)" fill="#d4d5cf" stroke="#8c918c" stroke-width=".5"/>
<ellipse cx="544.3" cy="247.8" rx="20.4" ry="17" transform="rotate(-6 544.3 247.8)" fill="#e6ded8"/><circle cx="533.2" cy="491.2" r="18.3" fill="#ffffff" fill-opacity=".1" stroke="#3f4746" stroke-width="1.6"/>
<circle cx="533.2" cy="491.2" r="18.3" fill="none" stroke="#d9dedc" stroke-width=".8"/>
<path d="M532.8 490 L532.8 502.4 L535.6 499.8 L537.6 504.4 L539.4 503.6 L537.4 499.2 L541.4 499 Z" fill="#111" stroke="#e8e8e8" stroke-width=".8" stroke-linejoin="round"/>
</svg>
<!-- /MODEL -->
<!-- VIEWCUBE -->
<svg class="abs" style="left:1100px;top:80px" width="90" height="100" viewBox="1100 80 90 100">
<defs><linearGradient id="vc1" gradientUnits="userSpaceOnUse" x1="1122" y1="110" x2="1172" y2="112"><stop offset="0" stop-color="#d4d4d5"/><stop offset=".45" stop-color="#dddddc"/><stop offset=".55" stop-color="#eeece1"/><stop offset="1" stop-color="#efede3"/></linearGradient>
<linearGradient id="vc2" gradientUnits="userSpaceOnUse" x1="1134" y1="145" x2="1173" y2="133"><stop offset="0" stop-color="#cfcfcf"/><stop offset=".5" stop-color="#dadad8"/><stop offset=".6" stop-color="#eae8de"/><stop offset="1" stop-color="#e6e4da"/></linearGradient></defs>
<path d="M1118.7 104.2 L1156 91 L1174.7 124.3 L1131.8 138 Z" fill="url(#vc1)" stroke="#c4c4c0" stroke-width=".5"/>
<path d="M1131.8 138 L1174.7 124.3 L1172 141.5 L1141.5 153.3 Z" fill="url(#vc2)" stroke="#c4c4c0" stroke-width=".5"/>
<path d="M1140 128 L1165 120 L1166 128 L1147 134.6 L1148 140 L1137 143.6 L1135 137 Z" fill="#cfcfd1" opacity=".7"/>
<path d="M1156 91 L1158 92.4 L1169 104" stroke="#c9c9c4" stroke-width=".8" fill="none"/>
<path d="M1116 100 L1126 125" stroke="#7a50e6" stroke-width="1.2"/>
<path d="M1126 125 L1139.6 160" stroke="#a3a3a0" stroke-width="1"/>
<text x="1111.5" y="102.5" font-family="Liberation Sans,sans-serif" font-size="11" fill="#7a50e6">Z</text>
<text x="1137.4" y="170.4" font-family="Liberation Sans,sans-serif" font-size="9" fill="#a3a3a0">X</text>
<path d="M1140.6 166 L1142.6 169.6" stroke="#f08a24" stroke-width="1"/>
<text transform="translate(1137.6 103.4) rotate(62)" font-family="Liberation Sans,sans-serif" font-size="9" fill="#8c8c8c" textLength="26.5" lengthAdjust="spacingAndGlyphs">FRONT</text>
<text transform="translate(1151.6 133.6) rotate(68)" font-family="Liberation Sans,sans-serif" font-size="6.4" fill="#9a9c9c" textLength="12.5" lengthAdjust="spacingAndGlyphs">BOTTOM</text>
</svg>
<!-- COMMENTS -->
<div id="chead" class="abs"></div>
<div class="abs" style="left:24.3px;top:662.6px;font-size:10px;line-height:14px;color:#444">COMMENTS</div>
<svg class="abs" style="left:230px;top:660px" width="30" height="18" viewBox="230 660 30 18"><ellipse cx="239.8" cy="669" rx="3.6" ry="3.4" fill="#222"/><path d="M237.4 669 H242.2 M239.8 666.6 V671.4" stroke="#ececec" stroke-width="1"/><path d="M248.6 664 V674" stroke="#b5b5b5" stroke-width="1"/></svg>
<!-- NAVBAR -->
<div id="navbar" class="abs"></div>
<svg class="abs" style="left:497px;top:660px" width="206" height="20" viewBox="497 660 206 20">
<g fill="none" stroke="#666" stroke-width=".9"><ellipse cx="506.5" cy="669" rx="6.4" ry="3.2"/><ellipse cx="506.5" cy="669" rx="3" ry="6.2" transform="rotate(20 506.5 669)"/></g><circle cx="507" cy="668.4" r="1" fill="#3b78c2"/>
<path d="M518 667 H525 L521.5 671.4 Z" fill="#222"/>
<rect x="528.4" y="666.6" width="11.4" height="7.6" fill="#a9b3bd" stroke="#666" stroke-width=".8"/><path d="M530 666.4 L531.6 663.8 H537.4 L538.4 666.4" fill="#dfe3e6" stroke="#666" stroke-width=".7"/><rect x="530.2" y="669.4" width="7.8" height="2.6" fill="#6f7a84"/>
<path d="M553.2 675.4 Q551.4 673.4 550.6 671 Q549.4 668.4 550.8 668 Q552 667.8 552.6 669.4 L553.2 670.6 V665.2 Q553.2 664.2 554.2 664.2 Q555.2 664.2 555.2 665.2 V663.8 Q555.2 662.8 556.2 662.8 Q557.2 662.8 557.2 663.8 V664.4 Q557.4 663.4 558.4 663.4 Q559.4 663.6 559.4 664.6 V665.6 Q559.6 664.8 560.6 665 Q561.6 665.2 561.6 666.2 V671 Q561.6 673.6 560.2 675.4 Z" fill="#fafafa" stroke="#555" stroke-width=".75" stroke-linejoin="round"/><path d="M555.2 665.2 V669.4 M557.2 664.4 V669.4 M559.4 665.6 V669.4" stroke="#555" stroke-width=".6" fill="none"/>
<circle cx="575.3" cy="667.4" r="4.5" fill="#f4f6f8" stroke="#555" stroke-width="1"/><path d="M578.6 670.8 L583.4 675" stroke="#444" stroke-width="1.8"/><path d="M581.6 662.4 V666 M579.8 664.2 H583.4" stroke="#555" stroke-width=".8"/>
<rect x="592.8" y="663" width="13" height="11.4" fill="none" stroke="#777" stroke-width=".8" stroke-dasharray="1.6 1.2"/><circle cx="597.6" cy="667.6" r="4.4" fill="#f4f6f8" stroke="#555" stroke-width="1"/><path d="M600.8 671 L605.4 675.4" stroke="#444" stroke-width="1.8"/>
<path d="M610 667 H617 L613.5 671.4 Z" fill="#222"/>
<rect x="627.2" y="663" width="12.6" height="8.8" fill="#8fa0b5" stroke="#6f7d8c" stroke-width=".7"/><path d="M631.6 672 H635.6 L636.6 674.8 H630.6 Z" fill="#6f7d8c"/>
<path d="M642 667 H649 L645.5 671.4 Z" fill="#222"/>
<rect x="653" y="663" width="12" height="12" fill="#e3e6e9" stroke="#777" stroke-width=".6"/><rect x="653" y="669" width="12" height="6" fill="#8f9ba6"/><path d="M656 663 V675 M659 663 V675 M662 663 V675 M653 666 H665 M653 669 H665 M653 672 H665" stroke="#666" stroke-width=".5" fill="none"/>
<path d="M668 667 H675 L671.5 671.4 Z" fill="#222"/>
<rect x="679.2" y="663" width="12" height="12" fill="#94a4b8" stroke="#5f6b78" stroke-width=".7"/><path d="M685.2 663 V675 M679.2 669 H691.2" stroke="#4f5a66" stroke-width=".7"/>
<path d="M693.8 667 H700.8 L697.3 671.4 Z" fill="#222"/>
</svg>
<!-- TIMELINE -->
<div id="timeline" class="abs"></div>
<!-- TIMELINE-ITEMS -->
<svg class="abs" style="left:0;top:684px" width="1200" height="39" viewBox="0 684 1200 39">
<defs>
<linearGradient id="tc1" x1="0" y1="0" x2="1" y2="0"><stop offset="0" stop-color="#ffffff"/><stop offset="1" stop-color="#9fadbd"/></linearGradient>
<linearGradient id="tc1b" x1="0" y1="0" x2="0" y2="1"><stop offset="0" stop-color="#f6f8fa"/><stop offset="1" stop-color="#a9b7c8"/></linearGradient><linearGradient id="tc2" x1="0" y1="0" x2="0" y2="1"><stop offset="0" stop-color="#f4f5f6"/><stop offset="1" stop-color="#d3d7db"/></linearGradient>
<linearGradient id="tc3" x1="0" y1="0" x2="0" y2="1"><stop offset="0" stop-color="#e4e6ea"/><stop offset=".3" stop-color="#d3d7de"/><stop offset=".36" stop-color="#a7b1c6"/><stop offset="1" stop-color="#b1bacb"/></linearGradient>
<g id="tcube"><path d="M-6.7 -2.6 L-3.7 -6.8 H5.4 Q6.4 -6.8 6.4 -5.8 V2.3 L2.6 6.7 H-5.7 Q-6.7 6.7 -6.7 5.7 Z" fill="#fafbfc" stroke="#8d959b" stroke-width=".8" stroke-linejoin="round"/><path d="M2.8 -3 L6 -6.4 V2.2 L2.8 6.2 Z" fill="url(#tc1b)"/><rect x="-6.3" y="-3.1" width="8.9" height="9.4" rx=".8" fill="#dcdfe2" stroke="#a1a8ae" stroke-width=".45"/></g>
<g id="tdark"><path d="M-6.5 -2.8 L-3.6 -6.8 H3.4 L6.6 -3.6 V3 L3.4 6.7 H-5.5 Q-6.5 6.7 -6.5 5.7 Z" fill="#f3f4f5" stroke="#838b91" stroke-width=".8" stroke-linejoin="round"/><path d="M3.6 -2.6 L6.2 -3.4 V2.9 L3.6 6 Z" fill="#596167"/><path d="M0.6 -6.3 H3.2 L6 -3.6 L3.6 -2.8 Z" fill="#9aa6bd"/><path d="M-6.1 -3.2 H1 L3.4 -0.8 V6.3 H-6.1 Z" fill="url(#tc3)" stroke="#8d959c" stroke-width=".45"/></g>
<g id="tblue"><rect x="-5.9" y="-5.9" width="11.8" height="11.8" fill="#fff" stroke="#8a9299" stroke-width=".8"/><path d="M-5.5 -5.5 H0.4 V-3.2 H-1.2 V-0.6 H-3.2 V0.8 H-5.5 Z" fill="#0b6fa4"/><path d="M5.5 5.5 H-0.4 V3.2 H1.2 V0.6 H3.2 V-0.8 H5.5 Z" fill="#0b6fa4"/><path d="M1.6 -5.5 H5.5 V-1.8 L3.6 -3.6 Z" fill="#0b6fa4" opacity=".0"/></g>
<g id="tjg"><path d="M-5.4 -1 L0 -5.8 V2.2 L-5.4 5.8 Z" fill="#b9c3cc" stroke="#6a747d" stroke-width=".7"/><path d="M0 -5.8 L5.4 -1 V5.8 L0 2.2 Z" fill="#8e9aa5" stroke="#6a747d" stroke-width=".7"/><path d="M-3.4 0 L-1.4 -1.8 V2 L-3.4 3.6 Z" fill="#eef1f3"/><path d="M1.4 -1.8 L3.4 0 V3.6 L1.4 2 Z" fill="#c9d3dc"/></g>
<g id="tjc"><path d="M-6.6 -1.4 L-2.6 -5.8 L-1 1.8 L-5.4 5.4 Z" fill="#d3dae0" stroke="#7d8891" stroke-width=".7"/><path d="M1 -3.8 L6.6 -0.6 V6 L1.6 2.6 Z" fill="#b4bec8" stroke="#7d8891" stroke-width=".7"/><path d="M-2.6 -5.8 L-0.4 -4.6 L0.6 2.4 L-1 1.8 Z" fill="#8f9ba6"/><circle cx="0.2" cy="-1.4" r="1.3" fill="#f08a24"/><circle cx="0.6" cy="-2.4" r=".7" fill="#e0322a"/></g>
</defs>
<g fill="#3c4444"><rect x="9.2" y="698.6" width="1.5" height="10.2"/><path d="M19 698.6 V708.8 L11 703.7 Z"/>
<path d="M37.4 698.8 V708.6 L29.4 703.7 Z"/><rect x="38" y="700.6" width="1.8" height="6.2" fill="#8a9090"/>
<path d="M50.8 697.6 V709.8 L60.6 703.7 Z"/>
<path d="M73.4 698.8 V708.6 L81.4 703.7 Z"/><rect x="71" y="700.6" width="1.8" height="6.2" fill="#8a9090"/>
<path d="M93 698.6 V708.8 L101 703.7 Z"/><rect x="101.2" y="698.6" width="1.5" height="10.2"/></g>
<path d="M128.7 716.6 H829.8 V712.6" fill="none" stroke="#8a8f8f" stroke-width="1.1"/>
<path d="M835 716.2 H990.2 V712.4" fill="none" stroke="#c0c2c2" stroke-width="1"/>
<rect x="123.4" y="713" width="7" height="7" rx="1.6" fill="#e6e6e6" stroke="#8a8f8f" stroke-width=".8"/><path d="M124.6 716.5 H129.2" stroke="#8a8f8f" stroke-width=".8"/>
<use href="#tcube" x="128.8" y="703"/>
<path d="M148.8 712.2 V716.4" stroke="#8a8f8f" stroke-width="1"/>
<g transform="translate(148.8 702)"><path d="M-2.6 -5.6 H2.6 L1.6 -3.6 L2.4 -0.4 L4 1.6 H-4 L-2.4 -0.4 L-1.6 -3.6 Z" fill="#e03a22"/><path d="M-5 2.8 L-1.6 1.4 H3 L4.6 2.6 L-1 3.4 Z" fill="#f1eee6" stroke="#b9b4a6" stroke-width=".4"/><path d="M0 2 V7" stroke="#8a8f8f" stroke-width="1"/><path d="M-1.6 -5 L-0.6 -2.6" stroke="#f6a28e" stroke-width=".9"/></g>
<path d="M168.8 712.2 V716.4" stroke="#8a8f8f" stroke-width="1"/>
<use href="#tcube" x="168.8" y="703"/>
<path d="M188.8 712.2 V716.4" stroke="#8a8f8f" stroke-width="1"/>
<use href="#tdark" x="188.8" y="703"/>
<path d="M208.8 712.2 V716.4" stroke="#8a8f8f" stroke-width="1"/>
<use href="#tcube" x="208.8" y="703"/>
<path d="M228.8 712.2 V716.4" stroke="#8a8f8f" stroke-width="1"/>
<use href="#tdark" x="228.8" y="703"/>
<path d="M248.8 712.2 V716.4" stroke="#8a8f8f" stroke-width="1"/>
<use href="#tcube" x="248.8" y="703"/>
<path d="M268.8 712.2 V716.4" stroke="#8a8f8f" stroke-width="1"/>
<use href="#tdark" x="268.8" y="703"/>
<path d="M288.8 712.2 V716.4" stroke="#8a8f8f" stroke-width="1"/>
<use href="#tcube" x="288.8" y="703"/>
<path d="M308.8 712.2 V716.4" stroke="#8a8f8f" stroke-width="1"/>
<use href="#tdark" x="308.8" y="703"/>
<path d="M328.8 712.2 V716.4" stroke="#8a8f8f" stroke-width="1"/>
<use href="#tcube" x="328.8" y="703"/>
<path d="M348.8 712.2 V716.4" stroke="#8a8f8f" stroke-width="1"/>
<use href="#tdark" x="348.8" y="703"/>
<path d="M368.8 712.2 V716.4" stroke="#8a8f8f" stroke-width="1"/>
<use href="#tblue" x="369.1" y="703"/>
<path d="M388.8 712.2 V716.4" stroke="#8a8f8f" stroke-width="1"/>
<use href="#tcube" x="388.8" y="703"/>
<path d="M408.8 712.2 V716.4" stroke="#8a8f8f" stroke-width="1"/>
<use href="#tcube" x="408.8" y="703"/>
<path d="M428.8 712.2 V716.4" stroke="#8a8f8f" stroke-width="1"/>
<use href="#tdark" x="428.8" y="703"/>
<path d="M448.8 712.2 V716.4" stroke="#8a8f8f" stroke-width="1"/>
<use href="#tcube" x="448.8" y="703"/>
<path d="M468.8 712.2 V716.4" stroke="#8a8f8f" stroke-width="1"/>
<use href="#tcube" x="468.8" y="703"/>
<path d="M488.8 712.2 V716.4" stroke="#8a8f8f" stroke-width="1"/>
<use href="#tdark" x="488.8" y="703"/>
<path d="M508.8 712.2 V716.4" stroke="#8a8f8f" stroke-width="1"/>
<use href="#tcube" x="508.8" y="703"/>
<path d="M528.8 712.2 V716.4" stroke="#8a8f8f" stroke-width="1"/>
<use href="#tdark" x="528.8" y="703"/>
<path d="M548.8 712.2 V716.4" stroke="#8a8f8f" stroke-width="1"/>
<use href="#tcube" x="548.8" y="703"/>
<path d="M568.8 712.2 V716.4" stroke="#8a8f8f" stroke-width="1"/>
<use href="#tdark" x="568.8" y="703"/>
<path d="M588.8 712.2 V716.4" stroke="#8a8f8f" stroke-width="1"/>
<use href="#tcube" x="588.8" y="703"/>
<path d="M608.8 712.2 V716.4" stroke="#8a8f8f" stroke-width="1"/>
<use href="#tdark" x="608.8" y="703"/>
<path d="M628.8 712.2 V716.4" stroke="#8a8f8f" stroke-width="1"/>
<use href="#tcube" x="628.8" y="703"/>
<path d="M648.8 712.2 V716.4" stroke="#8a8f8f" stroke-width="1"/>
<use href="#tcube" x="648.8" y="703"/>
<path d="M668.8 712.2 V716.4" stroke="#8a8f8f" stroke-width="1"/>
<use href="#tdark" x="668.8" y="703"/>
<path d="M688.8 712.2 V716.4" stroke="#8a8f8f" stroke-width="1"/>
<use href="#tcube" x="688.8" y="703"/>
<path d="M708.8 712.2 V716.4" stroke="#8a8f8f" stroke-width="1"/>
<use href="#tdark" x="708.8" y="703"/>
<path d="M728.8 712.2 V716.4" stroke="#8a8f8f" stroke-width="1"/>
<use href="#tcube" x="728.8" y="703"/>
<path d="M748.8 712.2 V716.4" stroke="#8a8f8f" stroke-width="1"/>
<use href="#tdark" x="748.8" y="703"/>
<path d="M768.8 712.2 V716.4" stroke="#8a8f8f" stroke-width="1"/>
<use href="#tcube" x="768.8" y="703"/>
<path d="M788.8 712.2 V716.4" stroke="#8a8f8f" stroke-width="1"/>
<use href="#tdark" x="788.8" y="703"/>
<path d="M808.8 712.2 V716.4" stroke="#8a8f8f" stroke-width="1"/>
<use href="#tcube" x="808.8" y="703"/>
<path d="M828.8 712.2 V716.4" stroke="#8a8f8f" stroke-width="1"/>
<use href="#tdark" x="828.8" y="703"/>
<path d="M848.8 712.2 V716.4" stroke="#c0c2c2" stroke-width="1"/>
<use href="#tblue" x="849.0" y="703"/>
<path d="M868.8 712.2 V716.4" stroke="#c0c2c2" stroke-width="1"/>
<use href="#tblue" x="869.0" y="703"/>
<path d="M888.8 712.2 V716.4" stroke="#c0c2c2" stroke-width="1"/>
<use href="#tjc" x="889.4" y="702.6"/>
<path d="M908.8 712.2 V716.4" stroke="#c0c2c2" stroke-width="1"/>
<use href="#tjg" x="909.4" y="702.6"/>
<path d="M928.8 712.2 V716.4" stroke="#c0c2c2" stroke-width="1"/>
<use href="#tjg" x="929.4" y="702.6"/>
<path d="M948.8 712.2 V716.4" stroke="#c0c2c2" stroke-width="1"/>
<use href="#tjg" x="949.4" y="702.6"/>
<path d="M968.8 712.2 V716.4" stroke="#c0c2c2" stroke-width="1"/>
<use href="#tjg" x="969.4" y="702.6"/>
<path d="M988.8 712.2 V716.4" stroke="#c0c2c2" stroke-width="1"/>
<use href="#tjc" x="989.4" y="702.6"/>
<path d="M999.7 695 V717.8" stroke="#3a4242" stroke-width="1.3"/><path d="M994.4 691.6 H1005 L1004.4 693.6 L1000.4 698 H999 L995 693.6 Z" fill="#3a4242"/>
<g transform="translate(1190 703.4)"><circle r="5" fill="none" stroke="#3c4444" stroke-width="3.6" stroke-dasharray="2.4 1.53"/><circle r="4.4" fill="#3c4444"/><circle r="2.3" fill="#efefef"/></g>
<rect x="0" y="721.6" width="1200" height="1.4" fill="#9c9c9c"/>
</svg>
</body></html>
